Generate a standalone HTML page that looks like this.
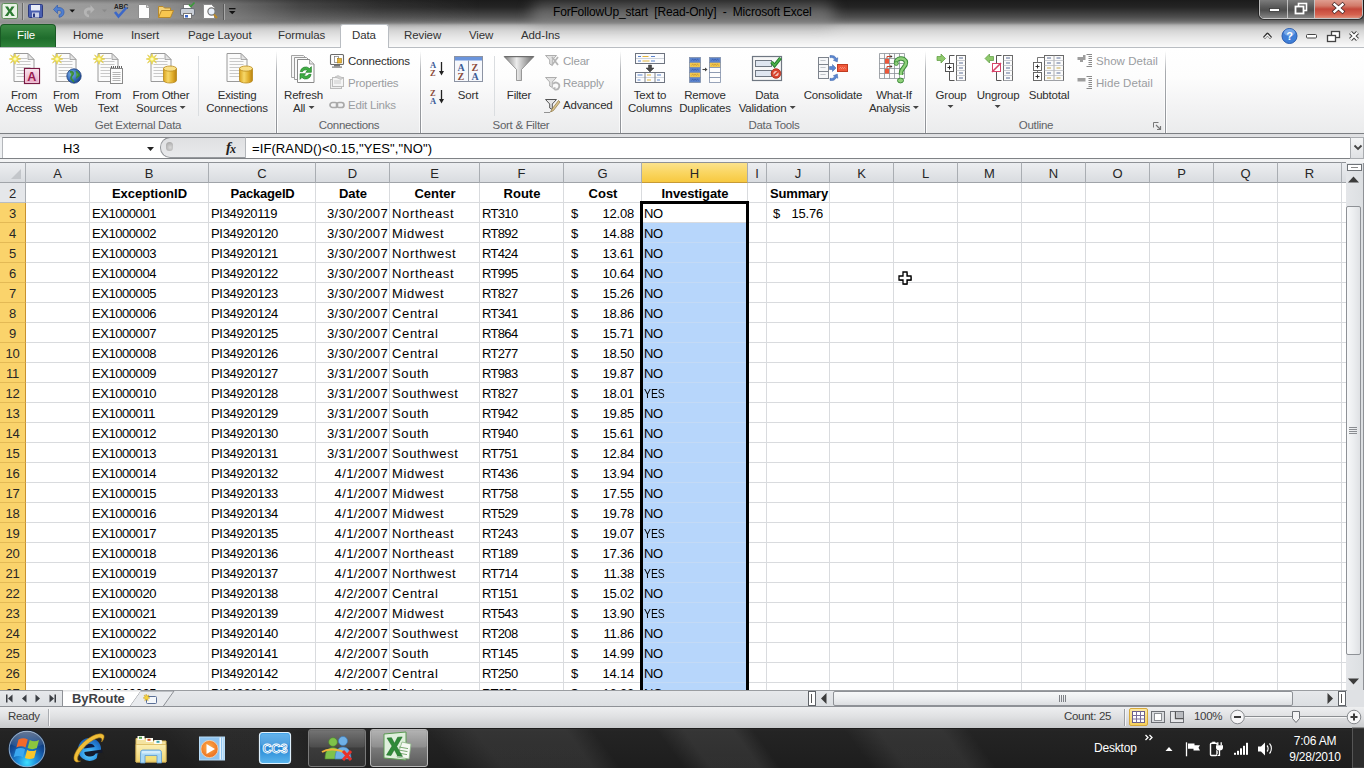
<!DOCTYPE html>
<html><head><meta charset="utf-8"><title>Excel</title>
<style>
*{box-sizing:border-box;margin:0;padding:0}
html,body{width:1364px;height:768px;overflow:hidden;background:#fff}
body{position:relative;font-family:"Liberation Sans",sans-serif;font-size:12px;color:#222}
.a{position:absolute}
.t{position:absolute;white-space:nowrap;line-height:1}
svg{position:absolute;overflow:visible}
/* title */
#title{left:0;top:0;width:1364px;height:47px;background:linear-gradient(#1b1b1b 0px,#242424 7px,#383838 12px,#4e4e4e 17px,#686868 21px,#808080 23px,#adadad 25px,#c0c0c0 27px,#d6d6d6 31px,#e6e6e6 37px,#f2f2f2 43px,#fafafa 47px)}
#qatglow{left:0;top:0;width:480px;height:30px;background:linear-gradient(90deg,rgba(172,172,172,.95) 0,rgba(160,160,160,.9) 150px,rgba(140,140,140,.75) 230px,rgba(120,120,120,.42) 300px,rgba(110,110,110,.18) 380px,rgba(100,100,100,0) 480px);-webkit-mask-image:linear-gradient(rgba(0,0,0,.75) 0,#000 4px,#000 18px,transparent 28px);mask-image:linear-gradient(rgba(0,0,0,.75) 0,#000 4px,#000 18px,transparent 28px)}
#titleglow{left:530px;top:3px;width:305px;height:24px;border-radius:12px;background:rgba(150,150,150,.5);filter:blur(7px)}
#titletxt{left:553px;top:6px;font-size:12px;color:#000;letter-spacing:-.18px}
/* tabs */
.tab{position:absolute;top:30px;font-size:11.500px;letter-spacing:-.1px;color:#333;white-space:nowrap;line-height:1}
#filetab{left:0;top:24px;width:56px;height:23px;border-radius:4px 4px 0 0;background:linear-gradient(#3c8a45,#1f6d2c 60%,#2e8139);border:1px solid #1a5a25;border-bottom:none}
#datatab{left:340px;top:24px;width:49px;height:24px;background:#fff;border:1px solid #b9bdc2;border-bottom:none;border-radius:3px 3px 0 0}
/* ribbon */
#ribbon{left:0;top:47px;width:1364px;height:87px;background:linear-gradient(#ffffff 0,#fdfdfd 28px,#f3f3f4 58px,#eaebec 87px);border-top:1px solid #b9bdc2}
#ribline{left:0;top:133px;width:1364px;height:1px;background:#7c7f83}
.gsep{position:absolute;top:51px;width:1px;height:82px;background:linear-gradient(rgba(160,163,167,0),#a9acb0 25%,#8e9196);box-shadow:1px 0 0 rgba(255,255,255,.9),-1px 0 0 rgba(255,255,255,.6)}
.isep{position:absolute;top:56px;width:1px;height:60px;background:#dadde0}
.gl{position:absolute;top:120px;font-size:11.500px;letter-spacing:-.3px;color:#5f6266;white-space:nowrap;line-height:1;transform:translateX(-50%)}
.bl{position:absolute;font-size:11.500px;letter-spacing:-.2px;color:#2e2e2e;white-space:nowrap;line-height:13px;text-align:center;transform:translateX(-50%)}
.sl{position:absolute;margin-top:1px;font-size:11.500px;letter-spacing:-.2px;color:#2e2e2e;white-space:nowrap;line-height:1}
.dis{color:#9a9da1}
.dd{display:inline-block;width:0;height:0;border-left:3px solid transparent;border-right:3px solid transparent;border-top:3px solid #444;vertical-align:middle;margin-left:3px;position:relative;top:-1px}
/* formula bar */
#fbar{left:0;top:134px;width:1364px;height:29px;background:linear-gradient(#dcdde0 0,#e2e3e5 3px,#eef0f2 4px,#eef0f2 24px,#f2f3f4 25px,#f4f5f6 29px)}
#namebox{left:2px;top:137px;width:170px;height:21px;background:#fff;border-top:1px solid #85888c;border-left:1px solid #b4b7bb}
#fxpill{left:160px;top:137px;width:86px;height:21px;background:linear-gradient(#dfe0e2,#e9eaec);border:1px solid #96999d;border-top-color:#85888c;border-right:none;border-radius:10px 0 0 10px}
#finput{left:245px;top:137px;width:1106px;height:21px;background:#fff;border-top:1px solid #85888c;border-left:1px solid #b4b7bb}
#fbline{left:0;top:158px;width:1364px;height:1px;background:#7f8286}
.ft{position:absolute;white-space:nowrap;line-height:1;font-size:13px;color:#000}
/* grid */
#grid{left:0;top:162px;width:1346px;height:528px;background:#fff;overflow:hidden}
.ch{position:absolute;top:0;height:21px;background:linear-gradient(#eceef1 0,#e3e5e8 50%,#d9dce0 100%);border-right:1px solid #a9adb2;border-bottom:1px solid #a0a4a9;border-top:1px solid #8e9196;font-size:13px;color:#262626;text-align:center;line-height:21px}
.ch.sel{background:linear-gradient(#fbe28c 0,#fad662 50%,#f7c940 100%);border-bottom-color:#c79a35}
.rh{position:absolute;left:0;width:26px;height:20px;background:#e5e7ea;border-right:1px solid #a9adb2;border-bottom:1px solid #b9bdc2;font-size:13px;color:#262626;text-align:center;line-height:21px;letter-spacing:-.2px}
.rh.sel{background:#fad36b;border-bottom-color:#e3b955;border-right-color:#c7912e}
.vl{position:absolute;top:21px;width:1px;height:510px;background:#d9dbde}
.hl{position:absolute;left:26px;height:1px;width:1321px;background:#d9dbde}
.c{position:absolute;white-space:nowrap;font-size:13px;line-height:22px;height:20px;color:#000}
.b{font-weight:bold;text-align:center}
.r{text-align:right}
.n{letter-spacing:-.45px}
.tx{letter-spacing:.35px}
/* scrollbars + tabs */
#vs{left:1346px;top:163px;width:18px;height:527px;background:linear-gradient(90deg,#e4e6e9,#dcdfe2);border-right:1px solid #8e9196}
.thumb{position:absolute;border:1px solid #8e9196;border-radius:2px}
#vthumb{left:1346px;top:206px;width:15px;height:449px;background:linear-gradient(90deg,#f7f8f9 0,#eceef0 50%,#dfe1e4 100%)}
#tabbar{left:0;top:690px;width:1364px;height:17px;background:linear-gradient(#e6e8eb,#dcdfe2);border-top:1px solid #9a9da1;border-bottom:1px solid #8e9196}
#hthumb{left:833px;top:691px;width:460px;height:15px;background:linear-gradient(#f7f8f9 0,#eceef0 50%,#dcdee1 100%)}
#status{left:0;top:707px;width:1364px;height:21px;background:linear-gradient(#eeeff0 0,#e0e1e3 45%,#c9cbcd 100%)}
.st{position:absolute;top:711px;font-size:11.500px;letter-spacing:-.3px;color:#3c3c3c;white-space:nowrap;line-height:1}
/* taskbar */
#taskbar{left:0;top:728px;width:1364px;height:40px;background:linear-gradient(#111 0,#2a2a2a 1px,#242424 3px,#212121 50%,#1d1d1d 100%)}
.tbtn{position:absolute;top:729px;height:38px;border-radius:3px}
.tt{position:absolute;color:#fff;white-space:nowrap;line-height:1;font-size:12px}

</style></head>
<body>
<!-- p_title -->
<div class="a" id="title"></div>
<div class="a" id="qatglow"></div>
<div class="a" id="titleglow"></div>
<div class="t" id="titletxt">ForFollowUp_start&nbsp; [Read-Only]&nbsp; -&nbsp; Microsoft Excel</div>
<svg style="left:0;top:0" width="250" height="24" viewBox="0 0 250 24">
<!-- excel icon -->
<rect x="2" y="3.5" width="15.5" height="15" rx="1.5" fill="#e9f3e6" stroke="#5d8f58" stroke-width="1"/>
<path d="M5 6.5 L8 6.5 L9.8 9.6 L11.6 6.5 L14.6 6.5 L11.3 11.2 L14.8 16 L11.7 16 L9.8 12.8 L7.9 16 L4.8 16 L8.3 11.2 Z" fill="#2c7a32"/>
<line x1="22.5" y1="3" x2="22.5" y2="20" stroke="#6a6a6a" stroke-width="1"/>
<line x1="23.5" y1="3" x2="23.5" y2="20" stroke="#b5b5b5" stroke-width="1"/>
<!-- save -->
<rect x="28.5" y="4.5" width="14" height="13" rx="1" fill="#4a5fb0" stroke="#2c3a80" stroke-width="1"/>
<rect x="31" y="5" width="9" height="5.5" fill="#e8ecf8"/>
<rect x="32" y="12.5" width="7" height="5" fill="#c9cfe6"/>
<rect x="33" y="13.5" width="2" height="3.5" fill="#2c3a80"/>
<!-- undo -->
<path d="M53.5 9.5 L57.5 5 L57.5 7.6 C62 7 64.5 9.5 64 13 C63.6 15.5 61.5 17.2 59 17.3 L59 14.8 C60.5 14.6 61.4 13.6 61.3 12.2 C61.2 10.8 60 10.2 57.5 10.6 L57.5 13.6 Z" fill="#4f7fd0" stroke="#2d56a8" stroke-width=".6"/>
<path d="M69.5 9.5 L75 9.5 L72.25 12.5 Z" fill="#111"/>
<!-- redo disabled -->
<path d="M94.5 9.5 L90.5 5 L90.5 7.6 C86 7 83.5 9.5 84 13 C84.4 15.5 86.5 17.2 89 17.3 L89 14.8 C87.5 14.6 86.6 13.6 86.7 12.2 C86.8 10.8 88 10.2 90.5 10.6 L90.5 13.6 Z" fill="#b8b8b8" opacity=".9"/>
<path d="M102 9.5 L107 9.5 L104.5 12.2 Z" fill="#8a8a8a"/>
<!-- spelling -->
<text x="114" y="8.5" font-family="Liberation Sans" font-size="6.5" font-weight="bold" fill="#222">ABC</text>
<path d="M115 12 L118.5 16.5 L126.5 7.5" fill="none" stroke="#3c68c8" stroke-width="2.6"/>
<!-- new -->
<path d="M138.5 4.5 L146.5 4.5 L149.5 7.5 L149.5 18.5 L138.5 18.5 Z" fill="#fdfdfd" stroke="#8c8c8c" stroke-width="1"/>
<path d="M146.5 4.5 L146.5 7.5 L149.5 7.5" fill="#d8d8d8" stroke="#8c8c8c" stroke-width=".8"/>
<!-- open -->
<path d="M158.5 17.5 L158.5 6.5 L163 6.5 L164.5 8 L170.5 8 L170.5 10" fill="#f3d27a" stroke="#b8892a" stroke-width="1"/>
<path d="M158.5 17.5 L161.5 10.5 L173.5 10.5 L170.5 17.5 Z" fill="#f7c64f" stroke="#b8892a" stroke-width="1"/>
<!-- print -->
<rect x="183.5" y="4.5" width="8" height="5" fill="#fff" stroke="#777" stroke-width="1"/>
<rect x="180.5" y="8.5" width="14" height="7" rx="1.5" fill="#c9ced6" stroke="#6b7078" stroke-width="1"/>
<rect x="183.500" y="13.5" width="8" height="5" fill="#fff" stroke="#777" stroke-width="1"/>
<rect x="185" y="15" width="3" height="2.5" fill="#3c68c8"/>
<path d="M189 4.5 L190.8 6.5 L194.5 2.5" fill="none" stroke="#3a9a3a" stroke-width="1.6"/>
<!-- preview -->
<path d="M203.500 4.500 L211.500 4.500 L214.500 7.500 L214.500 18.500 L203.500 18.500 Z" fill="#fdfdfd" stroke="#8c8c8c" stroke-width="1"/>
<circle cx="211.500" cy="11.500" r="3.600" fill="#e7eef8" stroke="#777" stroke-width="1.200"/>
<line x1="214" y1="14.500" x2="217" y2="18" stroke="#b8892a" stroke-width="2"/>
<line x1="223.500" y1="4" x2="223.500" y2="20" stroke="#5a5a5a" stroke-width="1"/>
<line x1="224.500" y1="4" x2="224.500" y2="20" stroke="#a8a8a8" stroke-width="1"/>
<!-- customize -->
<rect x="229" y="8" width="6.500" height="1.300" fill="#111"/>
<path d="M229 11 L235.500 11 L232.250 14.300 Z" fill="#111"/>
</svg>
<div class="a" style="left:1259px;top:-4px;width:104px;height:23px;border:1px solid rgba(235,235,235,.75);border-radius:0 0 5px 5px;overflow:hidden;box-shadow:0 0 0 1px rgba(20,20,20,.6)">
<div class="a" style="left:0;top:0;width:28px;height:22px;background:linear-gradient(#8a8a8a 0,#5a5a5a 45%,#4e4e4e 60%,#8c8c8c 100%);border-right:1px solid rgba(230,230,230,.7)"></div>
<div class="a" style="left:28px;top:0;width:27px;height:22px;background:linear-gradient(#8a8a8a 0,#5a5a5a 45%,#4e4e4e 60%,#8c8c8c 100%);border-right:1px solid rgba(230,230,230,.7)"></div>
<div class="a" style="left:55px;top:0;width:48px;height:22px;background:linear-gradient(#e6b0a4 0,#d27a6a 40%,#c4473a 55%,#d6624f 80%,#e29a86 100%)"></div>
</div>
<svg style="left:1259px;top:0" width="105" height="20" viewBox="0 0 105 20">
<rect x="10.500" y="8.500" width="10" height="3" fill="#fff" stroke="#333" stroke-width=".8"/>
<rect x="39.500" y="3.500" width="8" height="7" fill="none" stroke="#fff" stroke-width="1.600"/>
<rect x="36.500" y="6.500" width="8" height="7" fill="#555" stroke="#fff" stroke-width="1.800"/>
<path d="M75.500 4.500 L83.500 11.500 M83.500 4.500 L75.500 11.500" stroke="#4a2a2a" stroke-width="4" stroke-linecap="square"/>
<path d="M75.500 4.500 L83.500 11.500 M83.500 4.500 L75.500 11.500" stroke="#fff" stroke-width="2.400" stroke-linecap="square"/>
</svg>
<div class="a" id="filetab"></div>
<div class="a" id="datatab"></div>
<div class="tab" style="left:17px;color:#fff">File</div>
<div class="tab" style="left:73px">Home</div>
<div class="tab" style="left:131px">Insert</div>
<div class="tab" style="left:188px">Page Layout</div>
<div class="tab" style="left:278px">Formulas</div>
<div class="tab" style="left:352px">Data</div>
<div class="tab" style="left:404px">Review</div>
<div class="tab" style="left:469px">View</div>
<div class="tab" style="left:521px">Add-Ins</div>
<svg style="left:1255px;top:26px" width="109" height="20" viewBox="0 0 109 20">
<path d="M9 12 L12.500 8 L16 12" fill="none" stroke="#333" stroke-width="2.800" stroke-linejoin="round"/>
<path d="M9.500 12 L12.500 8.800 L15.500 12" fill="none" stroke="#fff" stroke-width="1.200"/>
<circle cx="34.500" cy="10" r="7.500" fill="#3f7fd8" stroke="#2a5cae" stroke-width="1"/>
<ellipse cx="34.500" cy="6.500" rx="5.500" ry="3.500" fill="#8db7ee" opacity=".7"/>
<text x="31.200" y="14.200" font-family="Liberation Sans" font-size="11" font-weight="bold" fill="#fff">?</text>
<rect x="51.500" y="8.500" width="10" height="3.500" rx="1" fill="#fff" stroke="#444" stroke-width="1"/>
<rect x="76.500" y="5.500" width="8" height="6" fill="#fff" stroke="#444" stroke-width="1.300"/>
<rect x="72.500" y="9.500" width="8" height="6" fill="#fff" stroke="#444" stroke-width="1.300"/>
<path d="M95.500 6.500 L102.500 13.500 M102.500 6.500 L95.500 13.500" stroke="#444" stroke-width="4"/>
<path d="M95.500 6.500 L102.500 13.500 M102.500 6.500 L95.500 13.500" stroke="#fff" stroke-width="2"/>
</svg>
<!-- p_ribbon -->
<div class="a" id="ribbon"></div><div class="a" id="ribline"></div>
<div class="a" style="left:341px;top:47px;width:47px;height:2px;background:#fff"></div>
<svg width="0" height="0" style="left:0;top:0"><defs>
<linearGradient id="gcyl" x1="0" x2="1" y1="0" y2="0"><stop offset="0" stop-color="#d9a21f"/><stop offset=".35" stop-color="#f7d869"/><stop offset=".7" stop-color="#e0ae2c"/><stop offset="1" stop-color="#b98212"/></linearGradient>
<linearGradient id="gfun" x1="0" x2="1" y1="0" y2="0"><stop offset="0" stop-color="#7a7a7a"/><stop offset=".42" stop-color="#ececec"/><stop offset=".6" stop-color="#c4c4c4"/><stop offset="1" stop-color="#6a6a6a"/></linearGradient>
<radialGradient id="gglobe" cx=".35" cy=".35" r=".8"><stop offset="0" stop-color="#7fb3ea"/><stop offset=".6" stop-color="#2f66b8"/><stop offset="1" stop-color="#16346e"/></radialGradient>
<linearGradient id="gacc" x1="0" x2="0" y1="0" y2="1"><stop offset="0" stop-color="#fbe4ee"/><stop offset="1" stop-color="#e8a4c2"/></linearGradient>
</defs></svg>
<div class="gsep" style="left:276px"></div>
<div class="gsep" style="left:420px"></div>
<div class="gsep" style="left:620px"></div>
<div class="gsep" style="left:925px"></div>
<div class="gsep" style="left:1165px"></div>
<div class="isep" style="left:198px"></div>
<div class="isep" style="left:494px"></div>
<div class="gl" style="left:138px">Get External Data</div>
<div class="gl" style="left:349px">Connections</div>
<div class="gl" style="left:521px">Sort &amp; Filter</div>
<div class="gl" style="left:774px">Data Tools</div>
<div class="gl" style="left:1036px">Outline</div>
<div class="bl" style="left:24px;top:89px">From<br>Access</div>
<div class="bl" style="left:66px;top:89px">From<br>Web</div>
<div class="bl" style="left:108px;top:89px">From<br>Text</div>
<div class="bl" style="left:161px;top:89px">From Other<br>Sources<span class="dd"></span></div>
<div class="bl" style="left:237px;top:89px">Existing<br>Connections</div>
<div class="bl" style="left:303.5px;top:89px">Refresh<br>All<span class="dd"></span></div>
<div class="bl" style="left:468px;top:89px">Sort</div>
<div class="bl" style="left:519px;top:89px">Filter</div>
<div class="bl" style="left:650px;top:89px">Text to<br>Columns</div>
<div class="bl" style="left:705px;top:89px">Remove<br>Duplicates</div>
<div class="bl" style="left:767px;top:89px">Data<br>Validation<span class="dd"></span></div>
<div class="bl" style="left:833px;top:89px">Consolidate</div>
<div class="bl" style="left:894px;top:89px">What-If<br>Analysis<span class="dd"></span></div>
<div class="bl" style="left:951px;top:89px">Group<br><span class="dd" style="margin-left:0;position:relative;top:-2px"></span></div>
<div class="bl" style="left:998px;top:89px">Ungroup<br><span class="dd" style="margin-left:0;position:relative;top:-2px"></span></div>
<div class="bl" style="left:1049px;top:89px">Subtotal</div>
<div class="sl" style="left:348px;top:55px">Connections</div>
<div class="sl dis" style="left:348px;top:77px">Properties</div>
<div class="sl dis" style="left:348px;top:99px">Edit Links</div>
<div class="sl dis" style="left:563px;top:55px">Clear</div>
<div class="sl dis" style="left:563px;top:77px">Reapply</div>
<div class="sl" style="left:563px;top:99px">Advanced</div>
<div class="sl dis" style="left:1096px;top:55px;letter-spacing:.05px">Show Detail</div>
<div class="sl dis" style="left:1096px;top:77px;letter-spacing:.05px">Hide Detail</div>
<svg style="left:8px;top:52px" width="32" height="32" viewBox="0 0 32 32"><path d="M6 1.5 L20 1.5 L26 7.5 L26 29.5 L6 29.5 Z" fill="#fbfbfb" stroke="#9a9a9a" stroke-width="1"/><path d="M20 1.5 L20 7.5 L26 7.5 Z" fill="#e3e3e3" stroke="#9a9a9a" stroke-width=".8"/><line x1="8.5" y1="6.5" x2="19.5" y2="6.5" stroke="#c9c9c9" stroke-width="1"/><line x1="8.5" y1="9.5" x2="22.5" y2="9.5" stroke="#c9c9c9" stroke-width="1"/><line x1="8.5" y1="12.5" x2="22.5" y2="12.5" stroke="#c9c9c9" stroke-width="1"/><line x1="8.5" y1="15.5" x2="22.5" y2="15.5" stroke="#c9c9c9" stroke-width="1"/><line x1="8.5" y1="18.5" x2="22.5" y2="18.5" stroke="#c9c9c9" stroke-width="1"/><line x1="8.5" y1="21.5" x2="22.5" y2="21.5" stroke="#c9c9c9" stroke-width="1"/><line x1="8.5" y1="24.5" x2="22.5" y2="24.5" stroke="#c9c9c9" stroke-width="1"/><g transform="translate(7,7) scale(.9)"><path d="M0 -6 L1.300 -2 L5 -4.500 L2.500 -1 L6.500 0 L2.500 1 L5 4.500 L1.300 2 L0 6 L-1.300 2 L-5 4.500 L-2.500 1 L-6.500 0 L-2.500 -1 L-5 -4.500 L-1.300 -2 Z" fill="#f5ec58" stroke="#d9c032" stroke-width=".6"/><circle r="1.800" fill="#fdf9c0"/></g><rect x="16.500" y="16.500" width="15" height="15" fill="url(#gacc)" stroke="#7a1a44" stroke-width="1.200"/><rect x="17.700" y="17.700" width="12.600" height="12.600" fill="none" stroke="#fff" stroke-opacity=".6" stroke-width=".8"/><text x="19.300" y="29.300" font-family="Liberation Sans" font-weight="bold" font-size="12.500" fill="#971a4e">A</text></svg>
<svg style="left:50px;top:52px" width="32" height="32" viewBox="0 0 32 32"><path d="M6 1.5 L20 1.5 L26 7.5 L26 29.5 L6 29.5 Z" fill="#fbfbfb" stroke="#9a9a9a" stroke-width="1"/><path d="M20 1.5 L20 7.5 L26 7.5 Z" fill="#e3e3e3" stroke="#9a9a9a" stroke-width=".8"/><line x1="8.5" y1="6.5" x2="19.5" y2="6.5" stroke="#c9c9c9" stroke-width="1"/><line x1="8.5" y1="9.5" x2="22.5" y2="9.5" stroke="#c9c9c9" stroke-width="1"/><line x1="8.5" y1="12.5" x2="22.5" y2="12.5" stroke="#c9c9c9" stroke-width="1"/><line x1="8.5" y1="15.5" x2="22.5" y2="15.5" stroke="#c9c9c9" stroke-width="1"/><line x1="8.5" y1="18.5" x2="22.5" y2="18.5" stroke="#c9c9c9" stroke-width="1"/><line x1="8.5" y1="21.5" x2="22.5" y2="21.5" stroke="#c9c9c9" stroke-width="1"/><line x1="8.5" y1="24.5" x2="22.5" y2="24.5" stroke="#c9c9c9" stroke-width="1"/><g transform="translate(7,7) scale(.9)"><path d="M0 -6 L1.300 -2 L5 -4.500 L2.500 -1 L6.500 0 L2.500 1 L5 4.500 L1.300 2 L0 6 L-1.300 2 L-5 4.500 L-2.500 1 L-6.500 0 L-2.500 -1 L-5 -4.500 L-1.300 -2 Z" fill="#f5ec58" stroke="#d9c032" stroke-width=".6"/><circle r="1.800" fill="#fdf9c0"/></g><circle cx="24" cy="24" r="7.200" fill="url(#gglobe)" stroke="#1d3f7c" stroke-width=".8"/><path transform="translate(0,1)" d="M20 19 C22 18 24 19.500 23 21.500 C22 23 20.500 23.500 21 25.500 C21.500 27 23 27.500 24 29 M26 18 C27.500 19.500 29.500 20 29 22.500 C28 24 26.500 23.500 26.500 25.500" fill="#4fa64a" stroke="#3c8a3a" stroke-width="1.600"/></svg>
<svg style="left:92px;top:52px" width="32" height="32" viewBox="0 0 32 32"><path d="M6 1.5 L20 1.5 L26 7.5 L26 29.5 L6 29.5 Z" fill="#fbfbfb" stroke="#9a9a9a" stroke-width="1"/><path d="M20 1.5 L20 7.5 L26 7.5 Z" fill="#e3e3e3" stroke="#9a9a9a" stroke-width=".8"/><line x1="8.5" y1="6.5" x2="19.5" y2="6.5" stroke="#c9c9c9" stroke-width="1"/><line x1="8.5" y1="9.5" x2="22.5" y2="9.5" stroke="#c9c9c9" stroke-width="1"/><line x1="8.5" y1="12.5" x2="22.5" y2="12.5" stroke="#c9c9c9" stroke-width="1"/><line x1="8.5" y1="15.5" x2="22.5" y2="15.5" stroke="#c9c9c9" stroke-width="1"/><line x1="8.5" y1="18.5" x2="22.5" y2="18.5" stroke="#c9c9c9" stroke-width="1"/><line x1="8.5" y1="21.5" x2="22.5" y2="21.5" stroke="#c9c9c9" stroke-width="1"/><line x1="8.5" y1="24.5" x2="22.5" y2="24.5" stroke="#c9c9c9" stroke-width="1"/><g transform="translate(7,7) scale(.9)"><path d="M0 -6 L1.300 -2 L5 -4.500 L2.500 -1 L6.500 0 L2.500 1 L5 4.500 L1.300 2 L0 6 L-1.300 2 L-5 4.500 L-2.500 1 L-6.500 0 L-2.500 -1 L-5 -4.500 L-1.300 -2 Z" fill="#f5ec58" stroke="#d9c032" stroke-width=".6"/><circle r="1.800" fill="#fdf9c0"/></g><g transform="translate(0,2)"><rect x="18.500" y="14.500" width="12" height="15" fill="#fcfcfc" stroke="#8a8a8a" stroke-width="1"/><path d="M19.500 14 v-2 M21.500 14 v-2 M23.500 14 v-2 M25.500 14 v-2 M27.500 14 v-2 M29.500 14 v-2" stroke="#555" stroke-width=".9"/><path d="M20.500 18.500 h8 M20.500 20.500 h8 M20.500 22.500 h8 M20.500 24.500 h8 M20.500 26.500 h8" stroke="#b5b5b5" stroke-width="1"/></g></svg>
<svg style="left:145px;top:52px" width="32" height="32" viewBox="0 0 32 32"><path d="M6 1.5 L20 1.5 L26 7.5 L26 29.5 L6 29.5 Z" fill="#fbfbfb" stroke="#9a9a9a" stroke-width="1"/><path d="M20 1.5 L20 7.5 L26 7.5 Z" fill="#e3e3e3" stroke="#9a9a9a" stroke-width=".8"/><line x1="8.5" y1="6.5" x2="19.5" y2="6.5" stroke="#c9c9c9" stroke-width="1"/><line x1="8.5" y1="9.5" x2="22.5" y2="9.5" stroke="#c9c9c9" stroke-width="1"/><line x1="8.5" y1="12.5" x2="22.5" y2="12.5" stroke="#c9c9c9" stroke-width="1"/><line x1="8.5" y1="15.5" x2="22.5" y2="15.5" stroke="#c9c9c9" stroke-width="1"/><line x1="8.5" y1="18.5" x2="22.5" y2="18.5" stroke="#c9c9c9" stroke-width="1"/><line x1="8.5" y1="21.5" x2="22.5" y2="21.5" stroke="#c9c9c9" stroke-width="1"/><line x1="8.5" y1="24.5" x2="22.5" y2="24.5" stroke="#c9c9c9" stroke-width="1"/><g transform="translate(7,7) scale(.9)"><path d="M0 -6 L1.300 -2 L5 -4.500 L2.500 -1 L6.500 0 L2.500 1 L5 4.500 L1.300 2 L0 6 L-1.300 2 L-5 4.500 L-2.500 1 L-6.500 0 L-2.500 -1 L-5 -4.500 L-1.300 -2 Z" fill="#f5ec58" stroke="#d9c032" stroke-width=".6"/><circle r="1.800" fill="#fdf9c0"/></g><path d="M18.5 16.6 L18.5 28.4 A6.5 2.6 0 0 0 31.5 28.4 L31.5 16.6 Z" fill="url(#gcyl)" stroke="#b98a1c" stroke-width=".8"/><ellipse cx="25" cy="16.6" rx="6.5" ry="2.6" fill="#f9e08a" stroke="#b98a1c" stroke-width=".8"/></svg>
<svg style="left:221px;top:52px" width="32" height="32" viewBox="0 0 32 32"><path d="M6 1.5 L20 1.5 L26 7.5 L26 29.5 L6 29.5 Z" fill="#fbfbfb" stroke="#9a9a9a" stroke-width="1"/><path d="M20 1.5 L20 7.5 L26 7.5 Z" fill="#e3e3e3" stroke="#9a9a9a" stroke-width=".8"/><line x1="8.5" y1="6.5" x2="19.5" y2="6.5" stroke="#c9c9c9" stroke-width="1"/><line x1="8.5" y1="9.5" x2="22.5" y2="9.5" stroke="#c9c9c9" stroke-width="1"/><line x1="8.5" y1="12.5" x2="22.5" y2="12.5" stroke="#c9c9c9" stroke-width="1"/><line x1="8.5" y1="15.5" x2="22.5" y2="15.5" stroke="#c9c9c9" stroke-width="1"/><line x1="8.5" y1="18.5" x2="22.5" y2="18.5" stroke="#c9c9c9" stroke-width="1"/><line x1="8.5" y1="21.5" x2="22.5" y2="21.5" stroke="#c9c9c9" stroke-width="1"/><line x1="8.5" y1="24.5" x2="22.5" y2="24.5" stroke="#c9c9c9" stroke-width="1"/><path d="M18.5 16.6 L18.5 28.4 A6.5 2.6 0 0 0 31.5 28.4 L31.5 16.6 Z" fill="url(#gcyl)" stroke="#b98a1c" stroke-width=".8"/><ellipse cx="25" cy="16.6" rx="6.5" ry="2.6" fill="#f9e08a" stroke="#b98a1c" stroke-width=".8"/></svg>
<svg style="left:288px;top:52px" width="32" height="32" viewBox="0 0 32 32"><path d="M3.500 3.500 h12 l4 4 v18 h-16 z" fill="#f6f6f6" stroke="#a4a4a4"/><path d="M6.500 5.500 h12 l4 4 v18 h-16 z" fill="#f9f9f9" stroke="#9a9a9a"/><path d="M9.500 7.500 h12 l4.500 4.500 v18.500 h-16.500 z" fill="#fefefe" stroke="#8a8a8a"/><path d="M21.500 7.500 v4.500 h4.500" fill="#e6e6e6" stroke="#8a8a8a" stroke-width=".8"/><g transform="translate(17.700,21) scale(1.350) translate(-18,-21)"><path d="M14 20 a4 4 0 0 1 6.800 -2.300 l1.400 -1.400 v4.200 h-4.200 l1.300 -1.300 a2.300 2.300 0 0 0 -3.600 .8 z M22 22 a4 4 0 0 1 -6.800 2.300 l-1.400 1.400 v-4.200 h4.200 l-1.300 1.300 a2.300 2.300 0 0 0 3.600 -.8 z" fill="#3fae44" stroke="#1f7a25" stroke-width=".5"/></g></svg>
<svg style="left:329px;top:53px" width="16" height="16" viewBox="0 0 16 16"><rect x="1.500" y="1.500" width="13" height="10" rx="1" fill="#fdfdfd" stroke="#6a6a6a" stroke-width="1.100"/><rect x="5" y="12" width="6" height="1.500" fill="#777"/><rect x="3" y="13.500" width="10" height="1.200" fill="#777"/><rect x="5.500" y="3.500" width="4" height="6" fill="#fff" stroke="#777" stroke-width=".7"/><rect x="8.500" y="5.500" width="4" height="4.500" fill="#eab73a" stroke="#a87c12" stroke-width=".6"/></svg>
<svg style="left:329px;top:75px" width="16" height="16" viewBox="0 0 16 16"><g opacity=".75"><rect x="1.500" y="4.500" width="11" height="9" fill="#ececec" stroke="#a8a8a8"/><rect x="3.500" y="2.500" width="11" height="9" fill="#f3f3f3" stroke="#a8a8a8"/><path d="M5 6 h7 M5 8 h7" stroke="#bdbdbd"/><path d="M6 2 l3 -1.500 l5 2.500 l-2 1.500 z" fill="#c4c4c4" stroke="#9c9c9c" stroke-width=".6"/></g></svg>
<svg style="left:329px;top:97px" width="16" height="16" viewBox="0 0 16 16"><g fill="none" stroke="#a9a9a9" stroke-width="1.700"><rect x="1" y="5.500" width="7.500" height="5" rx="2.500"/><rect x="7.500" y="5.500" width="7.500" height="5" rx="2.500"/></g></svg>
<svg style="left:429px;top:61px" width="16" height="16" viewBox="0 0 16 16"><text x="1" y="7" font-family="Liberation Serif" font-weight="bold" font-size="8.500" fill="#3b5b96">A</text><text x="1" y="14.500" font-family="Liberation Serif" font-weight="bold" font-size="8.500" fill="#8a4a3a">Z</text><path d="M12.500 1 v11" stroke="#222" stroke-width="1.300"/><path d="M10 10 h5 l-2.500 4.500 z" fill="#222"/></svg>
<svg style="left:429px;top:89px" width="16" height="16" viewBox="0 0 16 16"><text x="1" y="7" font-family="Liberation Serif" font-weight="bold" font-size="8.500" fill="#8a4a3a">Z</text><text x="1" y="14.500" font-family="Liberation Serif" font-weight="bold" font-size="8.500" fill="#3b5b96">A</text><path d="M12.500 1 v11" stroke="#222" stroke-width="1.300"/><path d="M10 10 h5 l-2.500 4.500 z" fill="#222"/></svg>
<svg style="left:453px;top:52px" width="32" height="32" viewBox="0 0 32 32"><rect x="1.500" y="4.500" width="28" height="25" fill="#f6f8fc" stroke="#8c93a3"/><rect x="2" y="5" width="27" height="3.500" fill="#6a94dc"/><line x1="15.500" y1="8.500" x2="15.500" y2="29" stroke="#8c93a3"/><text x="4.500" y="18.500" font-family="Liberation Serif" font-weight="bold" font-size="10" fill="#3b5b96">A</text><text x="4.500" y="27.500" font-family="Liberation Serif" font-weight="bold" font-size="10" fill="#8a4a3a">Z</text><text x="18.500" y="18.500" font-family="Liberation Serif" font-weight="bold" font-size="10" fill="#8a4a3a">Z</text><text x="18.500" y="27.500" font-family="Liberation Serif" font-weight="bold" font-size="10" fill="#3b5b96">A</text></svg>
<svg style="left:503px;top:52px" width="32" height="32" viewBox="0 0 32 32"><path d="M1 4.500 h30 l-12.500 13 v11 h-5 v-11 z" fill="url(#gfun)" stroke="#777" stroke-width=".7"/><path d="M1.500 4.700 h29" stroke="#666" stroke-width="1"/></svg>
<svg style="left:544px;top:53px" width="16" height="16" viewBox="0 0 16 16"><g opacity=".8"><path d="M1.500 2.500 h11 l-4.200 4.500 v5.500 l-2.600 -1.500 v-4 z" fill="#dcdcdc" stroke="#9a9a9a" stroke-width="1"/><path d="M8 4 l6 8 M14 4 l-6 8" stroke="#a4a4a4" stroke-width="1.800"/></g></svg>
<svg style="left:544px;top:75px" width="16" height="16" viewBox="0 0 16 16"><g opacity=".8"><path d="M1.500 2.500 h11 l-4.200 4.500 v5.500 l-2.600 -1.500 v-4 z" fill="#dcdcdc" stroke="#9a9a9a" stroke-width="1"/><path d="M9 9 a3.500 3.500 0 1 1 2 5.500" fill="none" stroke="#a4a4a4" stroke-width="1.800"/><path d="M8 13 l3.500 -1 l-.5 3.500 z" fill="#a4a4a4"/></g></svg>
<svg style="left:544px;top:97px" width="16" height="16" viewBox="0 0 16 16"><path d="M1.500 2.500 h11 l-4.200 4.500 v5.500 l-2.600 -1.500 v-4 z" fill="#e6e6e6" stroke="#555" stroke-width="1"/><path d="M14.500 3.500 l-6.500 8.500 l-1.500 3 l3 -1.500 l6.500 -8.500 z" fill="#dcc48c" stroke="#8a7444" stroke-width=".7"/><path d="M0.500 15.500 h5" stroke="#333" stroke-dasharray="1 1"/></svg>
<svg style="left:634px;top:52px" width="32" height="32" viewBox="0 0 32 32"><rect x="1.500" y="1.500" width="29" height="10" fill="#fbfcfe" stroke="#6e7480"/><path d="M2 6.500 h28" stroke="#c5cad3" stroke-width=".8"/><path d="M4 4.500 h3 M17 4.500 h4 M4 9 h3 M17 9 h4" stroke="#5b83cc" stroke-width="1.200"/><path d="M8.500 4.500 h6 M8.500 9 h7" stroke="#e2b33a" stroke-width="1.200"/><path d="M14.500 13 h3 v3 h2.500 l-4 4 l-4 -4 h2.500 z" fill="#4a4a4a" stroke="#2e2e2e" stroke-width=".5"/><rect x="1.500" y="20.500" width="29" height="10" fill="#fbfcfe" stroke="#6e7480"/><path d="M2 25.500 h28" stroke="#c5cad3" stroke-width=".8"/><path d="M11 20.500 v10 M21 20.500 v10" stroke="#6e7480" stroke-width=".9"/><path d="M3.500 23 h5 M23 23 h4 M3.500 28 h3 M23 28 h3" stroke="#5b83cc" stroke-width="1.200"/><path d="M13 23 h4 M13 28 h4" stroke="#e2b33a" stroke-width="1.200"/></svg>
<svg style="left:688px;top:52px" width="32" height="32" viewBox="0 0 32 32"><rect x="1.5" y="5.5" width="11" height="5" fill="#5b83cc" stroke="#7f8ea8" stroke-width=".8"/><rect x="1.5" y="10.5" width="11" height="5" fill="#f0c64e" stroke="#7f8ea8" stroke-width=".8"/><rect x="1.5" y="15.5" width="11" height="5" fill="#5b83cc" stroke="#7f8ea8" stroke-width=".8"/><rect x="1.5" y="20.5" width="11" height="5" fill="#f0c64e" stroke="#7f8ea8" stroke-width=".8"/><rect x="1.5" y="25.5" width="11" height="5" fill="#5b83cc" stroke="#7f8ea8" stroke-width=".8"/><path d="M14.500 17.500 h3" stroke="#444" stroke-width="1.100"/><path d="M17 15.500 l2.500 2 l-2.500 2 z" fill="#444"/><rect x="21.5" y="5.5" width="11" height="5" fill="#5b83cc" stroke="#7f8ea8" stroke-width=".8"/><rect x="21.5" y="10.5" width="11" height="5" fill="#f0c64e" stroke="#7f8ea8" stroke-width=".8"/><rect x="21.5" y="15.5" width="11" height="5" fill="#fdfdfd" stroke="#7f8ea8" stroke-width=".8"/><rect x="21.5" y="20.5" width="11" height="5" fill="#fdfdfd" stroke="#7f8ea8" stroke-width=".8"/><rect x="21.5" y="25.5" width="11" height="5" fill="#fdfdfd" stroke="#7f8ea8" stroke-width=".8"/><path d="M3.5 8.3 l1.200 -1 l1.200 1 l1.200 -1 l1.200 1 l1.200 -1 l1.200 1" fill="none" stroke="#2d4f9e" stroke-width=".7"/><path d="M3.5 13.3 l1.200 -1 l1.200 1 l1.200 -1 l1.200 1 l1.200 -1 l1.200 1" fill="none" stroke="#b8862a" stroke-width=".7"/><path d="M3.5 18.3 l1.200 -1 l1.200 1 l1.200 -1 l1.200 1 l1.200 -1 l1.200 1" fill="none" stroke="#2d4f9e" stroke-width=".7"/><path d="M3.5 23.3 l1.200 -1 l1.200 1 l1.200 -1 l1.200 1 l1.200 -1 l1.200 1" fill="none" stroke="#b8862a" stroke-width=".7"/><path d="M3.5 28.3 l1.200 -1 l1.200 1 l1.200 -1 l1.200 1 l1.200 -1 l1.200 1" fill="none" stroke="#2d4f9e" stroke-width=".7"/><path d="M23.5 8.3 l1.200 -1 l1.200 1 l1.200 -1 l1.200 1 l1.200 -1 l1.200 1" fill="none" stroke="#2d4f9e" stroke-width=".7"/><path d="M23.5 13.3 l1.200 -1 l1.200 1 l1.200 -1 l1.200 1 l1.200 -1 l1.200 1" fill="none" stroke="#b8862a" stroke-width=".7"/></svg>
<svg style="left:751px;top:52px" width="32" height="32" viewBox="0 0 32 32"><rect x="1.500" y="4.500" width="29" height="24" fill="#f7f7f7" stroke="#6f7782" stroke-width="1.200"/><rect x="4.500" y="8.500" width="16" height="6" fill="#dfe6f0" stroke="#6f7782"/><rect x="4.500" y="18.500" width="16" height="6" fill="#dfe6f0" stroke="#6f7782"/><path d="M20.500 10 l3 3.500 l6 -7.500" fill="none" stroke="#1f7a2a" stroke-width="3.400"/><path d="M20.500 10 l3 3.500 l6 -7.500" fill="none" stroke="#4fb04a" stroke-width="1.600"/><circle cx="25" cy="21.500" r="4.800" fill="#d8432e" stroke="#a82a1a" stroke-width=".8"/><circle cx="25" cy="21.500" r="2.600" fill="#f6c9c0"/><path d="M22.800 23.700 l4.400 -4.400" stroke="#d8432e" stroke-width="1.700"/></svg>
<svg style="left:817px;top:52px" width="32" height="32" viewBox="0 0 32 32"><rect x="1.500" y="5.500" width="10" height="7" fill="#f6f7f9" stroke="#7d838c"/><rect x="1.500" y="12.500" width="10" height="7" fill="#f6f7f9" stroke="#7d838c"/><rect x="1.500" y="19.500" width="10" height="7" fill="#f6f7f9" stroke="#7d838c"/><path d="M3.500 9 l1 -1 l1 1 l1 -1 l1 1 l1 -1 M3.500 16 l1 -1 l1 1 l1 -1 l1 1 l1 -1 M3.500 23 l1 -1 l1 1 l1 -1 l1 1 l1 -1" fill="none" stroke="#9aa0a8" stroke-width=".7"/><path d="M12.500 14.500 h3 v-2 l3.500 3.500 l-3.500 3.500 v-2 h-3 z" fill="#5b86d0" stroke="#3a62a8" stroke-width=".5"/><path d="M13 3.500 c3.500 -.5 5.500 .8 6.300 3 l1.500 -.8 l-.5 4.300 l-4 -1.800 l1.400 -.7 c-.8 -1.500 -2.200 -2.200 -4.700 -1.800 z" fill="#5b86d0" stroke="#3a62a8" stroke-width=".5"/><path d="M13 28.500 c3.500 .5 5.500 -.8 6.300 -3 l1.500 .8 l-.5 -4.300 l-4 1.800 l1.400 .7 c-.8 1.500 -2.200 2.200 -4.700 1.800 z" fill="#5b86d0" stroke="#3a62a8" stroke-width=".5"/><rect x="20.500" y="12.500" width="10" height="7" fill="#f0583a" stroke="#c03c22"/><path d="M22.500 16.500 l1 -1 l1 1 l1 -1 l1 1 l1 -1 l1 1" fill="none" stroke="#f9b9a8" stroke-width=".7"/></svg>
<svg style="left:878px;top:52px" width="32" height="32" viewBox="0 0 32 32"><rect x="1.500" y="1.500" width="25" height="25" fill="#fcfcfc"/><path d="M1.500 1.5 h25" stroke="#8a8f96" stroke-width=".8"/><path d="M1.500 6.5 h25" stroke="#8a8f96" stroke-width=".8"/><path d="M1.500 11.5 h25" stroke="#8a8f96" stroke-width=".8"/><path d="M1.500 16.5 h25" stroke="#8a8f96" stroke-width=".8"/><path d="M1.500 21.5 h25" stroke="#8a8f96" stroke-width=".8"/><path d="M1.500 26.5 h25" stroke="#8a8f96" stroke-width=".8"/><path d="M1.5 1.500 v25" stroke="#8a8f96" stroke-width=".8"/><path d="M6.5 1.500 v25" stroke="#8a8f96" stroke-width=".8"/><path d="M11.5 1.500 v25" stroke="#8a8f96" stroke-width=".8"/><path d="M16.5 1.500 v25" stroke="#8a8f96" stroke-width=".8"/><path d="M21.5 1.500 v25" stroke="#8a8f96" stroke-width=".8"/><path d="M26.5 1.500 v25" stroke="#8a8f96" stroke-width=".8"/><rect x="7" y="7" width="4" height="4.500" fill="#ee5638"/><rect x="7" y="17" width="4" height="4.500" fill="#ee5638"/><path d="M9 6.500 v-2 h4.500 M9 16.500 v-2 h4.500" fill="none" stroke="#c9412a" stroke-width="1"/><path d="M12.500 3 l2 1.500 l-2 1.500 z M12.500 13 l2 1.500 l-2 1.500 z" fill="#333"/><path d="M18 11.500 c-1 -6 9.500 -7 10 -1 c.3 4.500 -5 5.500 -5 10.500 v2" fill="none" stroke="#3c8a3a" stroke-width="4.400"/><path d="M18 11.500 c-1 -6 9.500 -7 10 -1 c.3 4.500 -5 5.500 -5 10.500 v2" fill="none" stroke="#8fd07a" stroke-width="2.400"/><ellipse cx="22.500" cy="28.500" rx="3" ry="2.400" fill="#8fd07a" stroke="#3c8a3a" stroke-width="1"/><circle cx="18.300" cy="11.500" r="2" fill="#8fd07a" stroke="#3c8a3a" stroke-width=".8"/></svg>
<svg style="left:935px;top:52px" width="32" height="32" viewBox="0 0 32 32"><rect x="21.5" y="3.500" width="9" height="25" fill="#fbfbfb" stroke="#6b6b6b"/><path d="M21.5 8.5 h9" stroke="#b4b8be" stroke-width=".7"/><path d="M24 6 h4" stroke="#5d6f96" stroke-width="1"/><path d="M21.5 13.5 h9" stroke="#b4b8be" stroke-width=".7"/><path d="M24 11 h4" stroke="#5d6f96" stroke-width="1"/><path d="M21.5 18.5 h9" stroke="#b4b8be" stroke-width=".7"/><path d="M24 16 h4" stroke="#5d6f96" stroke-width="1"/><path d="M21.5 23.5 h9" stroke="#b4b8be" stroke-width=".7"/><path d="M24 21 h4" stroke="#5d6f96" stroke-width="1"/><path d="M21.5 28.5 h9" stroke="#b4b8be" stroke-width=".7"/><path d="M24 26 h4" stroke="#5d6f96" stroke-width="1"/><path d="M19.500 3.500 h-5 v25 h5" fill="none" stroke="#555" stroke-width="1"/><rect x="10.500" y="11.500" width="8" height="8" fill="#fff" stroke="#555" stroke-width="1"/><path d="M12.500 15.500 h4 M14.500 13.500 v4" stroke="#222" stroke-width="1"/><path d="M2 4.500 h4 v-2.500 l4.500 4.500 l-4.500 4.500 v-2.500 h-4 z" fill="#8fc96c" stroke="#5a9a3e" stroke-width=".7"/></svg>
<svg style="left:982px;top:52px" width="32" height="32" viewBox="0 0 32 32"><rect x="21.5" y="3.500" width="9" height="25" fill="#fbfbfb" stroke="#6b6b6b"/><path d="M21.5 8.5 h9" stroke="#b4b8be" stroke-width=".7"/><path d="M24 6 h4" stroke="#5d6f96" stroke-width="1"/><path d="M21.5 13.5 h9" stroke="#b4b8be" stroke-width=".7"/><path d="M24 11 h4" stroke="#5d6f96" stroke-width="1"/><path d="M21.5 18.5 h9" stroke="#b4b8be" stroke-width=".7"/><path d="M24 16 h4" stroke="#5d6f96" stroke-width="1"/><path d="M21.5 23.5 h9" stroke="#b4b8be" stroke-width=".7"/><path d="M24 21 h4" stroke="#5d6f96" stroke-width="1"/><path d="M21.5 28.5 h9" stroke="#b4b8be" stroke-width=".7"/><path d="M24 26 h4" stroke="#5d6f96" stroke-width="1"/><path d="M19.500 3.500 h-5 v25 h5" fill="none" stroke="#555" stroke-width="1"/><rect x="10.500" y="11.500" width="8" height="8" fill="#fff" stroke="#d8446a" stroke-width="1"/><path d="M10 20 l9 -9" stroke="#d8446a" stroke-width="1.600"/><path d="M11.500 4.500 h-4 v-2.500 l-4.500 4.500 l4.500 4.500 v-2.500 h4 z" fill="#8fc96c" stroke="#5a9a3e" stroke-width=".7"/></svg>
<svg style="left:1032px;top:52px" width="32" height="32" viewBox="0 0 32 32"><rect x="12.500" y="3.500" width="19" height="25" fill="#fbfbfb" stroke="#6b6b6b"/><path d="M22 3.500 v25" stroke="#9a9a9a" stroke-width=".8"/><path d="M12.500 8.5 h19" stroke="#b4b8be" stroke-width=".7"/><path d="M15 6 h4 M24.500 6 h4" stroke="#5d6f96" stroke-width="1"/><path d="M12.500 13.5 h19" stroke="#b4b8be" stroke-width=".7"/><path d="M15 11 h4 M24.500 11 h4" stroke="#5d6f96" stroke-width="1"/><path d="M12.500 18.5 h19" stroke="#b4b8be" stroke-width=".7"/><path d="M15 16 h4 M24.500 16 h4" stroke="#c9aa4a" stroke-width="1"/><path d="M12.500 23.5 h19" stroke="#b4b8be" stroke-width=".7"/><path d="M15 21 h4 M24.500 21 h4" stroke="#5d6f96" stroke-width="1"/><path d="M12.500 28.5 h19" stroke="#b4b8be" stroke-width=".7"/><path d="M15 26 h4 M24.500 26 h4" stroke="#c9aa4a" stroke-width="1"/><path d="M12 5.500 h-6.500 v5 M5.500 18.500 v2" fill="none" stroke="#666" stroke-width=".9"/><rect x="1.500" y="10.500" width="8" height="8" fill="#fff" stroke="#5a5a5a" stroke-width=".9"/><path d="M3.500 14.500 h4 M5.500 12.500 v4" stroke="#222" stroke-width=".9"/><rect x="1.500" y="20.500" width="8" height="8" fill="#fff" stroke="#5a5a5a" stroke-width=".9"/><path d="M3.500 24.500 h4 M5.500 22.500 v4" stroke="#222" stroke-width=".9"/></svg>
<svg style="left:1077px;top:53px" width="16" height="16" viewBox="0 0 16 16"><path d="M9.500 1.500 h5.500 M11.500 3.500 h3.500 M11.500 5.500 h3.500 M11.500 7.500 h3.500 M11.500 9.500 h3.500 M11.500 11.500 h3.500 M9.500 13.500 h5.500" fill="none" stroke="#8a8a8a" stroke-width="1"/><path d="M3 3 h3 v-2 h2.500 v2 h0 v3 h-2.500 v2 h-3 v-2 h-2.500 v-3 h2.500 z" fill="#9d9d9d" transform="translate(0,1)"/></svg>
<svg style="left:1077px;top:75px" width="16" height="16" viewBox="0 0 16 16"><path d="M9.500 1.500 h5.500 M11.500 3.500 h3.500 M11.500 5.500 h3.500 M11.500 7.500 h3.500 M11.500 9.500 h3.500 M11.500 11.500 h3.500 M9.500 13.500 h5.500" fill="none" stroke="#8a8a8a" stroke-width="1"/><rect x="0.500" y="3" width="8" height="3.500" fill="#9d9d9d"/></svg>
<svg style="left:1152px;top:121px" width="10" height="10" viewBox="0 0 10 10"><path d="M1.500 6.500 v-5 h5" fill="none" stroke="#777" stroke-width="1"/><path d="M4 4 l4.500 4.500 M8.500 5 v3.500 h-3.500" fill="none" stroke="#777" stroke-width="1.200"/></svg>
<!-- p_formula -->
<div class="a" id="fbar"></div>
<div class="a" id="namebox"></div><div class="a" id="fxpill"></div><div class="a" id="finput"></div><div class="a" id="fbline"></div>
<div class="ft" style="left:63px;top:142px">H3</div>
<svg style="left:146px;top:146px" width="10" height="6"><path d="M1 1 h7 l-3.500 4 z" fill="#222"/></svg>
<div class="a" style="left:166px;top:142px;width:7px;height:9px;border-radius:4px;background:radial-gradient(circle at 60% 60%,#d8d8d8,#9c9c9c)"></div>
<div class="t" style="left:226px;top:140px;font-family:'Liberation Serif',serif;font-style:italic;font-weight:bold;font-size:15px;color:#222">f<span style="font-size:12px;position:relative;top:1px;left:-1px">x</span></div>
<div class="ft" style="left:252px;top:142px;letter-spacing:.1px">=IF(RAND()&lt;0.15,"YES","NO")</div>
<div class="a" style="left:1350px;top:137px;width:14px;height:22px;background:linear-gradient(#f4f5f6,#dfe1e4);border:1px solid #a9acb0"></div>
<svg style="left:1353px;top:144px" width="10" height="8"><path d="M1.500 1.500 l3.500 3.500 l3.500 -3.500" fill="none" stroke="#444" stroke-width="1.800"/></svg>
<!-- p_grid -->
<div class="a" id="grid">
<div class="ch" style="left:0;width:26px"></div>
<svg style="left:10px;top:6px" width="12" height="12"><path d="M11 1 v10 h-10 z" fill="#c3c6ca"/></svg>
<div class="ch" style="left:26px;width:64px">A</div>
<div class="ch" style="left:90px;width:119px">B</div>
<div class="ch" style="left:209px;width:107px">C</div>
<div class="ch" style="left:316px;width:74px">D</div>
<div class="ch" style="left:390px;width:90px">E</div>
<div class="ch" style="left:480px;width:84px">F</div>
<div class="ch" style="left:564px;width:78px">G</div>
<div class="ch sel" style="left:642px;width:106px">H</div>
<div class="ch" style="left:748px;width:19px">I</div>
<div class="ch" style="left:767px;width:63px">J</div>
<div class="ch" style="left:830px;width:64px">K</div>
<div class="ch" style="left:894px;width:64px">L</div>
<div class="ch" style="left:958px;width:64px">M</div>
<div class="ch" style="left:1022px;width:64px">N</div>
<div class="ch" style="left:1086px;width:64px">O</div>
<div class="ch" style="left:1150px;width:64px">P</div>
<div class="ch" style="left:1214px;width:64px">Q</div>
<div class="ch" style="left:1278px;width:64px">R</div>
<div class="ch" style="left:1342px;width:19px"></div>
<div class="rh" style="top:21px">2</div>
<div class="rh sel" style="top:41px">3</div>
<div class="rh sel" style="top:61px">4</div>
<div class="rh sel" style="top:81px">5</div>
<div class="rh sel" style="top:101px">6</div>
<div class="rh sel" style="top:121px">7</div>
<div class="rh sel" style="top:141px">8</div>
<div class="rh sel" style="top:161px">9</div>
<div class="rh sel" style="top:181px">10</div>
<div class="rh sel" style="top:201px">11</div>
<div class="rh sel" style="top:221px">12</div>
<div class="rh sel" style="top:241px">13</div>
<div class="rh sel" style="top:261px">14</div>
<div class="rh sel" style="top:281px">15</div>
<div class="rh sel" style="top:301px">16</div>
<div class="rh sel" style="top:321px">17</div>
<div class="rh sel" style="top:341px">18</div>
<div class="rh sel" style="top:361px">19</div>
<div class="rh sel" style="top:381px">20</div>
<div class="rh sel" style="top:401px">21</div>
<div class="rh sel" style="top:421px">22</div>
<div class="rh sel" style="top:441px">23</div>
<div class="rh sel" style="top:461px">24</div>
<div class="rh sel" style="top:481px">25</div>
<div class="rh sel" style="top:501px">26</div>
<div class="rh sel" style="top:521px">27</div>
<div class="vl" style="left:89px"></div>
<div class="vl" style="left:208px"></div>
<div class="vl" style="left:315px"></div>
<div class="vl" style="left:389px"></div>
<div class="vl" style="left:479px"></div>
<div class="vl" style="left:563px"></div>
<div class="vl" style="left:641px"></div>
<div class="vl" style="left:747px"></div>
<div class="vl" style="left:766px"></div>
<div class="vl" style="left:829px"></div>
<div class="vl" style="left:893px"></div>
<div class="vl" style="left:957px"></div>
<div class="vl" style="left:1021px"></div>
<div class="vl" style="left:1085px"></div>
<div class="vl" style="left:1149px"></div>
<div class="vl" style="left:1213px"></div>
<div class="vl" style="left:1277px"></div>
<div class="vl" style="left:1341px"></div>
<div class="vl" style="left:1360px"></div>
<div class="hl" style="top:40px"></div>
<div class="hl" style="top:60px"></div>
<div class="hl" style="top:80px"></div>
<div class="hl" style="top:100px"></div>
<div class="hl" style="top:120px"></div>
<div class="hl" style="top:140px"></div>
<div class="hl" style="top:160px"></div>
<div class="hl" style="top:180px"></div>
<div class="hl" style="top:200px"></div>
<div class="hl" style="top:220px"></div>
<div class="hl" style="top:240px"></div>
<div class="hl" style="top:260px"></div>
<div class="hl" style="top:280px"></div>
<div class="hl" style="top:300px"></div>
<div class="hl" style="top:320px"></div>
<div class="hl" style="top:340px"></div>
<div class="hl" style="top:360px"></div>
<div class="hl" style="top:380px"></div>
<div class="hl" style="top:400px"></div>
<div class="hl" style="top:420px"></div>
<div class="hl" style="top:440px"></div>
<div class="hl" style="top:460px"></div>
<div class="hl" style="top:480px"></div>
<div class="hl" style="top:500px"></div>
<div class="hl" style="top:520px"></div>
<div class="hl" style="top:540px"></div>
<div class="a" style="left:643px;top:61px;width:103px;height:470px;background:#b7d6fb"></div>
<div class="a" style="left:643px;top:80px;width:103px;height:1px;background:#c4daf5"></div>
<div class="a" style="left:643px;top:100px;width:103px;height:1px;background:#c4daf5"></div>
<div class="a" style="left:643px;top:120px;width:103px;height:1px;background:#c4daf5"></div>
<div class="a" style="left:643px;top:140px;width:103px;height:1px;background:#c4daf5"></div>
<div class="a" style="left:643px;top:160px;width:103px;height:1px;background:#c4daf5"></div>
<div class="a" style="left:643px;top:180px;width:103px;height:1px;background:#c4daf5"></div>
<div class="a" style="left:643px;top:200px;width:103px;height:1px;background:#c4daf5"></div>
<div class="a" style="left:643px;top:220px;width:103px;height:1px;background:#c4daf5"></div>
<div class="a" style="left:643px;top:240px;width:103px;height:1px;background:#c4daf5"></div>
<div class="a" style="left:643px;top:260px;width:103px;height:1px;background:#c4daf5"></div>
<div class="a" style="left:643px;top:280px;width:103px;height:1px;background:#c4daf5"></div>
<div class="a" style="left:643px;top:300px;width:103px;height:1px;background:#c4daf5"></div>
<div class="a" style="left:643px;top:320px;width:103px;height:1px;background:#c4daf5"></div>
<div class="a" style="left:643px;top:340px;width:103px;height:1px;background:#c4daf5"></div>
<div class="a" style="left:643px;top:360px;width:103px;height:1px;background:#c4daf5"></div>
<div class="a" style="left:643px;top:380px;width:103px;height:1px;background:#c4daf5"></div>
<div class="a" style="left:643px;top:400px;width:103px;height:1px;background:#c4daf5"></div>
<div class="a" style="left:643px;top:420px;width:103px;height:1px;background:#c4daf5"></div>
<div class="a" style="left:643px;top:440px;width:103px;height:1px;background:#c4daf5"></div>
<div class="a" style="left:643px;top:460px;width:103px;height:1px;background:#c4daf5"></div>
<div class="a" style="left:643px;top:480px;width:103px;height:1px;background:#c4daf5"></div>
<div class="a" style="left:643px;top:500px;width:103px;height:1px;background:#c4daf5"></div>
<div class="a" style="left:643px;top:520px;width:103px;height:1px;background:#c4daf5"></div>
<div class="a" style="left:643px;top:540px;width:103px;height:1px;background:#c4daf5"></div>
<div class="a" style="left:640px;top:39px;width:109px;height:500px;border:3px solid #000;border-bottom:none"></div>
<div class="c b" style="left:90px;top:21px;width:119px;letter-spacing:0px">ExceptionID</div>
<div class="c b" style="left:209px;top:21px;width:107px;letter-spacing:-0.2px">PackageID</div>
<div class="c b" style="left:316px;top:21px;width:74px;letter-spacing:0px">Date</div>
<div class="c b" style="left:390px;top:21px;width:90px;letter-spacing:0px">Center</div>
<div class="c b" style="left:480px;top:21px;width:84px;letter-spacing:0px">Route</div>
<div class="c b" style="left:564px;top:21px;width:78px;letter-spacing:0px">Cost</div>
<div class="c b" style="left:642px;top:21px;width:106px;letter-spacing:-0.1px">Investigate</div>
<div class="c b" style="left:767px;top:21px;width:64px;letter-spacing:-0.2px">Summary</div>
<div class="c" style="left:92px;top:41px;letter-spacing:-.44px">EX1000001</div>
<div class="c" style="left:211px;top:41px;letter-spacing:-.31px">PI34920119</div>
<div class="c r" style="left:316px;top:41px;width:72px;letter-spacing:.35px">3/30/2007</div>
<div class="c" style="left:392px;top:41px;letter-spacing:.65px">Northeast</div>
<div class="c" style="left:482px;top:41px;letter-spacing:-.66px">RT310</div>
<div class="c" style="left:571px;top:41px">$</div>
<div class="c r" style="left:580px;top:41px;width:54px;letter-spacing:-.2px">12.08</div>
<div class="c" style="left:644px;top:41px;letter-spacing:-.4px">NO</div>
<div class="c" style="left:92px;top:61px;letter-spacing:-.44px">EX1000002</div>
<div class="c" style="left:211px;top:61px;letter-spacing:-.31px">PI34920120</div>
<div class="c r" style="left:316px;top:61px;width:72px;letter-spacing:.35px">3/30/2007</div>
<div class="c" style="left:392px;top:61px;letter-spacing:.65px">Midwest</div>
<div class="c" style="left:482px;top:61px;letter-spacing:-.66px">RT892</div>
<div class="c" style="left:571px;top:61px">$</div>
<div class="c r" style="left:580px;top:61px;width:54px;letter-spacing:-.2px">14.88</div>
<div class="c" style="left:644px;top:61px;letter-spacing:-.4px">NO</div>
<div class="c" style="left:92px;top:81px;letter-spacing:-.44px">EX1000003</div>
<div class="c" style="left:211px;top:81px;letter-spacing:-.31px">PI34920121</div>
<div class="c r" style="left:316px;top:81px;width:72px;letter-spacing:.35px">3/30/2007</div>
<div class="c" style="left:392px;top:81px;letter-spacing:.65px">Northwest</div>
<div class="c" style="left:482px;top:81px;letter-spacing:-.66px">RT424</div>
<div class="c" style="left:571px;top:81px">$</div>
<div class="c r" style="left:580px;top:81px;width:54px;letter-spacing:-.2px">13.61</div>
<div class="c" style="left:644px;top:81px;letter-spacing:-.4px">NO</div>
<div class="c" style="left:92px;top:101px;letter-spacing:-.44px">EX1000004</div>
<div class="c" style="left:211px;top:101px;letter-spacing:-.31px">PI34920122</div>
<div class="c r" style="left:316px;top:101px;width:72px;letter-spacing:.35px">3/30/2007</div>
<div class="c" style="left:392px;top:101px;letter-spacing:.65px">Northeast</div>
<div class="c" style="left:482px;top:101px;letter-spacing:-.66px">RT995</div>
<div class="c" style="left:571px;top:101px">$</div>
<div class="c r" style="left:580px;top:101px;width:54px;letter-spacing:-.2px">10.64</div>
<div class="c" style="left:644px;top:101px;letter-spacing:-.4px">NO</div>
<div class="c" style="left:92px;top:121px;letter-spacing:-.44px">EX1000005</div>
<div class="c" style="left:211px;top:121px;letter-spacing:-.31px">PI34920123</div>
<div class="c r" style="left:316px;top:121px;width:72px;letter-spacing:.35px">3/30/2007</div>
<div class="c" style="left:392px;top:121px;letter-spacing:.65px">Midwest</div>
<div class="c" style="left:482px;top:121px;letter-spacing:-.66px">RT827</div>
<div class="c" style="left:571px;top:121px">$</div>
<div class="c r" style="left:580px;top:121px;width:54px;letter-spacing:-.2px">15.26</div>
<div class="c" style="left:644px;top:121px;letter-spacing:-.4px">NO</div>
<div class="c" style="left:92px;top:141px;letter-spacing:-.44px">EX1000006</div>
<div class="c" style="left:211px;top:141px;letter-spacing:-.31px">PI34920124</div>
<div class="c r" style="left:316px;top:141px;width:72px;letter-spacing:.35px">3/30/2007</div>
<div class="c" style="left:392px;top:141px;letter-spacing:.65px">Central</div>
<div class="c" style="left:482px;top:141px;letter-spacing:-.66px">RT341</div>
<div class="c" style="left:571px;top:141px">$</div>
<div class="c r" style="left:580px;top:141px;width:54px;letter-spacing:-.2px">18.86</div>
<div class="c" style="left:644px;top:141px;letter-spacing:-.4px">NO</div>
<div class="c" style="left:92px;top:161px;letter-spacing:-.44px">EX1000007</div>
<div class="c" style="left:211px;top:161px;letter-spacing:-.31px">PI34920125</div>
<div class="c r" style="left:316px;top:161px;width:72px;letter-spacing:.35px">3/30/2007</div>
<div class="c" style="left:392px;top:161px;letter-spacing:.65px">Central</div>
<div class="c" style="left:482px;top:161px;letter-spacing:-.66px">RT864</div>
<div class="c" style="left:571px;top:161px">$</div>
<div class="c r" style="left:580px;top:161px;width:54px;letter-spacing:-.2px">15.71</div>
<div class="c" style="left:644px;top:161px;letter-spacing:-.4px">NO</div>
<div class="c" style="left:92px;top:181px;letter-spacing:-.44px">EX1000008</div>
<div class="c" style="left:211px;top:181px;letter-spacing:-.31px">PI34920126</div>
<div class="c r" style="left:316px;top:181px;width:72px;letter-spacing:.35px">3/30/2007</div>
<div class="c" style="left:392px;top:181px;letter-spacing:.65px">Central</div>
<div class="c" style="left:482px;top:181px;letter-spacing:-.66px">RT277</div>
<div class="c" style="left:571px;top:181px">$</div>
<div class="c r" style="left:580px;top:181px;width:54px;letter-spacing:-.2px">18.50</div>
<div class="c" style="left:644px;top:181px;letter-spacing:-.4px">NO</div>
<div class="c" style="left:92px;top:201px;letter-spacing:-.44px">EX1000009</div>
<div class="c" style="left:211px;top:201px;letter-spacing:-.31px">PI34920127</div>
<div class="c r" style="left:316px;top:201px;width:72px;letter-spacing:.35px">3/31/2007</div>
<div class="c" style="left:392px;top:201px;letter-spacing:.65px">South</div>
<div class="c" style="left:482px;top:201px;letter-spacing:-.66px">RT983</div>
<div class="c" style="left:571px;top:201px">$</div>
<div class="c r" style="left:580px;top:201px;width:54px;letter-spacing:-.2px">19.87</div>
<div class="c" style="left:644px;top:201px;letter-spacing:-.4px">NO</div>
<div class="c" style="left:92px;top:221px;letter-spacing:-.44px">EX1000010</div>
<div class="c" style="left:211px;top:221px;letter-spacing:-.31px">PI34920128</div>
<div class="c r" style="left:316px;top:221px;width:72px;letter-spacing:.35px">3/31/2007</div>
<div class="c" style="left:392px;top:221px;letter-spacing:.65px">Southwest</div>
<div class="c" style="left:482px;top:221px;letter-spacing:-.66px">RT827</div>
<div class="c" style="left:571px;top:221px">$</div>
<div class="c r" style="left:580px;top:221px;width:54px;letter-spacing:-.2px">18.01</div>
<div class="c" style="left:644px;top:221px;transform:scaleX(.8);transform-origin:0 50%">YES</div>
<div class="c" style="left:92px;top:241px;letter-spacing:-.44px">EX1000011</div>
<div class="c" style="left:211px;top:241px;letter-spacing:-.31px">PI34920129</div>
<div class="c r" style="left:316px;top:241px;width:72px;letter-spacing:.35px">3/31/2007</div>
<div class="c" style="left:392px;top:241px;letter-spacing:.65px">South</div>
<div class="c" style="left:482px;top:241px;letter-spacing:-.66px">RT942</div>
<div class="c" style="left:571px;top:241px">$</div>
<div class="c r" style="left:580px;top:241px;width:54px;letter-spacing:-.2px">19.85</div>
<div class="c" style="left:644px;top:241px;letter-spacing:-.4px">NO</div>
<div class="c" style="left:92px;top:261px;letter-spacing:-.44px">EX1000012</div>
<div class="c" style="left:211px;top:261px;letter-spacing:-.31px">PI34920130</div>
<div class="c r" style="left:316px;top:261px;width:72px;letter-spacing:.35px">3/31/2007</div>
<div class="c" style="left:392px;top:261px;letter-spacing:.65px">South</div>
<div class="c" style="left:482px;top:261px;letter-spacing:-.66px">RT940</div>
<div class="c" style="left:571px;top:261px">$</div>
<div class="c r" style="left:580px;top:261px;width:54px;letter-spacing:-.2px">15.61</div>
<div class="c" style="left:644px;top:261px;letter-spacing:-.4px">NO</div>
<div class="c" style="left:92px;top:281px;letter-spacing:-.44px">EX1000013</div>
<div class="c" style="left:211px;top:281px;letter-spacing:-.31px">PI34920131</div>
<div class="c r" style="left:316px;top:281px;width:72px;letter-spacing:.35px">3/31/2007</div>
<div class="c" style="left:392px;top:281px;letter-spacing:.65px">Southwest</div>
<div class="c" style="left:482px;top:281px;letter-spacing:-.66px">RT751</div>
<div class="c" style="left:571px;top:281px">$</div>
<div class="c r" style="left:580px;top:281px;width:54px;letter-spacing:-.2px">12.84</div>
<div class="c" style="left:644px;top:281px;letter-spacing:-.4px">NO</div>
<div class="c" style="left:92px;top:301px;letter-spacing:-.44px">EX1000014</div>
<div class="c" style="left:211px;top:301px;letter-spacing:-.31px">PI34920132</div>
<div class="c r" style="left:316px;top:301px;width:72px;letter-spacing:.35px">4/1/2007</div>
<div class="c" style="left:392px;top:301px;letter-spacing:.65px">Midwest</div>
<div class="c" style="left:482px;top:301px;letter-spacing:-.66px">RT436</div>
<div class="c" style="left:571px;top:301px">$</div>
<div class="c r" style="left:580px;top:301px;width:54px;letter-spacing:-.2px">13.94</div>
<div class="c" style="left:644px;top:301px;letter-spacing:-.4px">NO</div>
<div class="c" style="left:92px;top:321px;letter-spacing:-.44px">EX1000015</div>
<div class="c" style="left:211px;top:321px;letter-spacing:-.31px">PI34920133</div>
<div class="c r" style="left:316px;top:321px;width:72px;letter-spacing:.35px">4/1/2007</div>
<div class="c" style="left:392px;top:321px;letter-spacing:.65px">Midwest</div>
<div class="c" style="left:482px;top:321px;letter-spacing:-.66px">RT758</div>
<div class="c" style="left:571px;top:321px">$</div>
<div class="c r" style="left:580px;top:321px;width:54px;letter-spacing:-.2px">17.55</div>
<div class="c" style="left:644px;top:321px;letter-spacing:-.4px">NO</div>
<div class="c" style="left:92px;top:341px;letter-spacing:-.44px">EX1000016</div>
<div class="c" style="left:211px;top:341px;letter-spacing:-.31px">PI34920134</div>
<div class="c r" style="left:316px;top:341px;width:72px;letter-spacing:.35px">4/1/2007</div>
<div class="c" style="left:392px;top:341px;letter-spacing:.65px">Midwest</div>
<div class="c" style="left:482px;top:341px;letter-spacing:-.66px">RT529</div>
<div class="c" style="left:571px;top:341px">$</div>
<div class="c r" style="left:580px;top:341px;width:54px;letter-spacing:-.2px">19.78</div>
<div class="c" style="left:644px;top:341px;letter-spacing:-.4px">NO</div>
<div class="c" style="left:92px;top:361px;letter-spacing:-.44px">EX1000017</div>
<div class="c" style="left:211px;top:361px;letter-spacing:-.31px">PI34920135</div>
<div class="c r" style="left:316px;top:361px;width:72px;letter-spacing:.35px">4/1/2007</div>
<div class="c" style="left:392px;top:361px;letter-spacing:.65px">Northeast</div>
<div class="c" style="left:482px;top:361px;letter-spacing:-.66px">RT243</div>
<div class="c" style="left:571px;top:361px">$</div>
<div class="c r" style="left:580px;top:361px;width:54px;letter-spacing:-.2px">19.07</div>
<div class="c" style="left:644px;top:361px;transform:scaleX(.8);transform-origin:0 50%">YES</div>
<div class="c" style="left:92px;top:381px;letter-spacing:-.44px">EX1000018</div>
<div class="c" style="left:211px;top:381px;letter-spacing:-.31px">PI34920136</div>
<div class="c r" style="left:316px;top:381px;width:72px;letter-spacing:.35px">4/1/2007</div>
<div class="c" style="left:392px;top:381px;letter-spacing:.65px">Northeast</div>
<div class="c" style="left:482px;top:381px;letter-spacing:-.66px">RT189</div>
<div class="c" style="left:571px;top:381px">$</div>
<div class="c r" style="left:580px;top:381px;width:54px;letter-spacing:-.2px">17.36</div>
<div class="c" style="left:644px;top:381px;letter-spacing:-.4px">NO</div>
<div class="c" style="left:92px;top:401px;letter-spacing:-.44px">EX1000019</div>
<div class="c" style="left:211px;top:401px;letter-spacing:-.31px">PI34920137</div>
<div class="c r" style="left:316px;top:401px;width:72px;letter-spacing:.35px">4/1/2007</div>
<div class="c" style="left:392px;top:401px;letter-spacing:.65px">Northwest</div>
<div class="c" style="left:482px;top:401px;letter-spacing:-.66px">RT714</div>
<div class="c" style="left:571px;top:401px">$</div>
<div class="c r" style="left:580px;top:401px;width:54px;letter-spacing:-.2px">11.38</div>
<div class="c" style="left:644px;top:401px;transform:scaleX(.8);transform-origin:0 50%">YES</div>
<div class="c" style="left:92px;top:421px;letter-spacing:-.44px">EX1000020</div>
<div class="c" style="left:211px;top:421px;letter-spacing:-.31px">PI34920138</div>
<div class="c r" style="left:316px;top:421px;width:72px;letter-spacing:.35px">4/2/2007</div>
<div class="c" style="left:392px;top:421px;letter-spacing:.65px">Central</div>
<div class="c" style="left:482px;top:421px;letter-spacing:-.66px">RT151</div>
<div class="c" style="left:571px;top:421px">$</div>
<div class="c r" style="left:580px;top:421px;width:54px;letter-spacing:-.2px">15.02</div>
<div class="c" style="left:644px;top:421px;letter-spacing:-.4px">NO</div>
<div class="c" style="left:92px;top:441px;letter-spacing:-.44px">EX1000021</div>
<div class="c" style="left:211px;top:441px;letter-spacing:-.31px">PI34920139</div>
<div class="c r" style="left:316px;top:441px;width:72px;letter-spacing:.35px">4/2/2007</div>
<div class="c" style="left:392px;top:441px;letter-spacing:.65px">Midwest</div>
<div class="c" style="left:482px;top:441px;letter-spacing:-.66px">RT543</div>
<div class="c" style="left:571px;top:441px">$</div>
<div class="c r" style="left:580px;top:441px;width:54px;letter-spacing:-.2px">13.90</div>
<div class="c" style="left:644px;top:441px;transform:scaleX(.8);transform-origin:0 50%">YES</div>
<div class="c" style="left:92px;top:461px;letter-spacing:-.44px">EX1000022</div>
<div class="c" style="left:211px;top:461px;letter-spacing:-.31px">PI34920140</div>
<div class="c r" style="left:316px;top:461px;width:72px;letter-spacing:.35px">4/2/2007</div>
<div class="c" style="left:392px;top:461px;letter-spacing:.65px">Southwest</div>
<div class="c" style="left:482px;top:461px;letter-spacing:-.66px">RT208</div>
<div class="c" style="left:571px;top:461px">$</div>
<div class="c r" style="left:580px;top:461px;width:54px;letter-spacing:-.2px">11.86</div>
<div class="c" style="left:644px;top:461px;letter-spacing:-.4px">NO</div>
<div class="c" style="left:92px;top:481px;letter-spacing:-.44px">EX1000023</div>
<div class="c" style="left:211px;top:481px;letter-spacing:-.31px">PI34920141</div>
<div class="c r" style="left:316px;top:481px;width:72px;letter-spacing:.35px">4/2/2007</div>
<div class="c" style="left:392px;top:481px;letter-spacing:.65px">South</div>
<div class="c" style="left:482px;top:481px;letter-spacing:-.66px">RT145</div>
<div class="c" style="left:571px;top:481px">$</div>
<div class="c r" style="left:580px;top:481px;width:54px;letter-spacing:-.2px">14.99</div>
<div class="c" style="left:644px;top:481px;letter-spacing:-.4px">NO</div>
<div class="c" style="left:92px;top:501px;letter-spacing:-.44px">EX1000024</div>
<div class="c" style="left:211px;top:501px;letter-spacing:-.31px">PI34920142</div>
<div class="c r" style="left:316px;top:501px;width:72px;letter-spacing:.35px">4/2/2007</div>
<div class="c" style="left:392px;top:501px;letter-spacing:.65px">Central</div>
<div class="c" style="left:482px;top:501px;letter-spacing:-.66px">RT250</div>
<div class="c" style="left:571px;top:501px">$</div>
<div class="c r" style="left:580px;top:501px;width:54px;letter-spacing:-.2px">14.14</div>
<div class="c" style="left:644px;top:501px;letter-spacing:-.4px">NO</div>
<div class="c" style="left:92px;top:521px;letter-spacing:-.44px">EX1000025</div>
<div class="c" style="left:211px;top:521px;letter-spacing:-.31px">PI34920143</div>
<div class="c r" style="left:316px;top:521px;width:72px;letter-spacing:.35px">4/2/2007</div>
<div class="c" style="left:392px;top:521px;letter-spacing:.65px">Midwest</div>
<div class="c" style="left:482px;top:521px;letter-spacing:-.66px">RT358</div>
<div class="c" style="left:571px;top:521px">$</div>
<div class="c r" style="left:580px;top:521px;width:54px;letter-spacing:-.2px">16.32</div>
<div class="c" style="left:644px;top:521px;letter-spacing:-.4px">NO</div>
<div class="c" style="left:773px;top:41px">$</div>
<div class="c r" style="left:780px;top:41px;width:43px;letter-spacing:-.2px">15.76</div>
</div>
<svg style="left:898px;top:271px" width="15" height="15" viewBox="0 0 15 15"><path d="M5.500 1.500 h4 v4 h4 v4 h-4 v4 h-4 v-4 h-4 v-4 h4 z" fill="#000"/><path d="M5 1 h4 v4 h4 v4 h-4 v4 h-4 v-4 h-4 v-4 h4 z" fill="#fff" stroke="#000" stroke-width="1.300"/></svg>
<!-- p_bottom -->
<div class="a" id="vs"></div>
<div class="a" style="left:1347px;top:164px;width:15px;height:7px;background:#fff;border:1px solid #6f7378"></div><div class="a" style="left:1351px;top:167px;width:7px;height:1px;background:#888"></div>
<svg style="left:1348px;top:176px" width="11" height="7"><path d="M0 6.500 l5.500 -6 l5.500 6 z" fill="#3c3c3c"/></svg>
<div class="thumb" id="vthumb"></div>
<div class="a" style="left:1349px;top:427px;width:8px;height:7px;background:repeating-linear-gradient(#8a8d91 0,#8a8d91 1px,transparent 1px,transparent 2px)"></div>
<svg style="left:1348px;top:678px" width="11" height="7"><path d="M0 .5 l5.500 6 l5.500 -6 z" fill="#3c3c3c"/></svg>
<div class="a" id="tabbar"></div>
<svg style="left:0;top:691px" width="180" height="16" viewBox="0 0 180 16"><g fill="#3a3d42"><rect x="6" y="3.500" width="1.500" height="8"/><path d="M12.500 3.500 v8 l-4.500 -4 z"/><path d="M26.500 3.500 v8 l-4.500 -4 z"/><path d="M35.500 3.500 v8 l4.500 -4 z"/><path d="M49.500 3.500 v8 l4.500 -4 z"/><rect x="54.500" y="3.500" width="1.500" height="8"/></g><path d="M62.500 0 V15.500 H130 L141 0 Z" fill="#fff" stroke="#8e9196" stroke-width="1"/><path d="M63 0 H140.500" stroke="#fff" stroke-width="1.500"/><path d="M130 15.500 H163 L174 0 H141" fill="#e9ebee" stroke="#8e9196" stroke-width="1"/><rect x="146.500" y="5.500" width="10" height="7" rx="1" fill="#f4f7fb" stroke="#5a6f96" stroke-width="1"/><path d="M146 3 l1 2 l2 -1 l-1 2 l2 1 l-2.200 .6 l.4 2.200 l-1.700 -1.400 l-1.700 1.400 l.4 -2.200 l-2.200 -.6 l2 -1 l-1 -2 l2 1 z" fill="#f5d23a" stroke="#c99a14" stroke-width=".4"/></svg>
<div class="t" style="left:72px;top:692px;font-size:13px;font-weight:bold;color:#3f4246;letter-spacing:-.1px">ByRoute</div>
<div class="a" style="left:808px;top:691px;width:8px;height:15px;background:#fff;border:1px solid #5f6368"></div><div class="a" style="left:811px;top:694px;width:1px;height:9px;background:#555"></div>
<svg style="left:821px;top:693px" width="6" height="11"><path d="M5.500 0 v11 l-5.500 -5.500 z" fill="#3c3c3c"/></svg>
<div class="thumb" id="hthumb"></div>
<div class="a" style="left:1059px;top:695px;width:8px;height:7px;background:repeating-linear-gradient(90deg,#7e8186 0,#7e8186 1px,transparent 1px,transparent 2px)"></div>
<svg style="left:1327px;top:693px" width="6" height="11"><path d="M.5 0 v11 l5.500 -5.500 z" fill="#3c3c3c"/></svg>
<div class="a" style="left:1338px;top:691px;width:8px;height:15px;background:#fff;border:1px solid #5f6368"></div><div class="a" style="left:1341px;top:694px;width:1px;height:9px;background:#555"></div>
<div class="a" style="left:1347px;top:690px;width:17px;height:17px;background:#dfe1e4"></div>
<div class="a" id="status"></div>
<div class="st" style="left:8px">Ready</div>
<div class="a" style="left:48px;top:709px;width:1px;height:17px;background:#a9acb0;box-shadow:1px 0 0 #f6f6f6"></div>
<div class="st" style="left:1064px">Count: 25</div>
<div class="a" style="left:1124px;top:709px;width:1px;height:17px;background:#9a9da1;box-shadow:1px 0 0 #f6f6f6"></div>
<div class="a" style="left:1129px;top:708px;width:19px;height:18px;background:linear-gradient(#fbe9a4,#f7d25c);border:1px solid #d8a93a;border-radius:2px"></div>
<svg style="left:1129px;top:708px" width="60" height="18" viewBox="0 0 60 18"><rect x="3.500" y="3.500" width="12" height="11" fill="#fff" stroke="#6a5f8a" stroke-width="1"/><path d="M3.500 7.500 h12 M3.500 11 h12 M7.500 3.500 v11 M11.500 3.500 v11" stroke="#7a6f9a" stroke-width="1"/><rect x="22.500" y="3.500" width="13" height="11" fill="#d9dbde" stroke="#6d7075" stroke-width="1"/><rect x="25.500" y="5.500" width="7" height="7" fill="#fff" stroke="#8a8d91" stroke-width="1"/><rect x="41.500" y="3.500" width="13" height="11" fill="#e6e7e9" stroke="#6d7075" stroke-width="1"/><path d="M46.500 3.500 v7 h8" fill="none" stroke="#555" stroke-width="1.300"/><rect x="47.500" y="4" width="6.500" height="6" fill="#b9bbbf"/></svg>
<div class="st" style="left:1194px">100%</div>
<div class="a" style="left:1245px;top:716px;width:102px;height:1px;background:#8a8d91;box-shadow:0 1px 0 #f4f4f4"></div>
<svg style="left:1229px;top:708px" width="135" height="19" viewBox="0 0 135 19"><circle cx="8.500" cy="9" r="6.800" fill="#f6f6f7" stroke="#85888c" stroke-width="1"/><rect x="5" y="8" width="7" height="2" fill="#3c3c3c"/><circle cx="125" cy="9" r="6.800" fill="#f6f6f7" stroke="#85888c" stroke-width="1"/><rect x="121.500" y="8" width="7" height="2" fill="#3c3c3c"/><rect x="124" y="5.500" width="2" height="7" fill="#3c3c3c"/><path d="M63.500 3.500 h7 v7 l-3.500 4 l-3.500 -4 z" fill="#f4f4f5" stroke="#6d7075" stroke-width="1"/></svg>
<!-- p_taskbar -->
<div class="a" id="taskbar"></div>
<div class="a" style="left:0;top:729px;width:1364px;height:39px;background:linear-gradient(54deg,rgba(255,255,255,0) 0,rgba(255,255,255,0) 13.6%,rgba(255,255,255,.035) 16.6%,rgba(255,255,255,.035) 21.6%,rgba(255,255,255,0) 23.6%,rgba(255,255,255,0) 32.6%,rgba(255,255,255,.075) 36.1%,rgba(255,255,255,.075) 42.6%,rgba(255,255,255,0) 44.6%,rgba(255,255,255,0) 49.1%,rgba(255,255,255,.08) 51.1%,rgba(255,255,255,.08) 54.6%,rgba(255,255,255,0) 56.1%,rgba(255,255,255,0) 62.6%,rgba(255,255,255,.075) 65.1%,rgba(255,255,255,.075) 69.6%,rgba(255,255,255,0) 71.6%,rgba(255,255,255,0) 100%)"></div>
<svg style="left:0;top:728px" width="440" height="40" viewBox="0 0 440 40"><defs>
<radialGradient id="orb" cx=".5" cy=".88" r=".85"><stop offset="0" stop-color="#3fe0ff"/><stop offset=".3" stop-color="#1f8fdc"/><stop offset=".62" stop-color="#134f9c"/><stop offset="1" stop-color="#0c2a5a"/></radialGradient>
<linearGradient id="orbhi" x1="0" x2="0" y1="0" y2="1"><stop offset="0" stop-color="#fff" stop-opacity=".75"/><stop offset="1" stop-color="#fff" stop-opacity=".05"/></linearGradient>
<radialGradient id="ieb" cx=".45" cy=".7" r=".8"><stop offset="0" stop-color="#5fd4ff"/><stop offset=".5" stop-color="#2a8ee0"/><stop offset="1" stop-color="#1450a8"/></radialGradient>
<linearGradient id="fold" x1="0" x2="0" y1="0" y2="1"><stop offset="0" stop-color="#fcefb4"/><stop offset="1" stop-color="#f0d46e"/></linearGradient>
<linearGradient id="cc3" x1="0" x2="0" y1="0" y2="1"><stop offset="0" stop-color="#4aa8ea"/><stop offset=".5" stop-color="#2a88d4"/><stop offset="1" stop-color="#5ab6ee"/></linearGradient>
<linearGradient id="tb1" x1="0" x2="0" y1="0" y2="1"><stop offset="0" stop-color="#6a6a6a"/><stop offset=".5" stop-color="#3c3c3c"/><stop offset="1" stop-color="#333"/></linearGradient>
<linearGradient id="tb2" x1="0" x2="0" y1="0" y2="1"><stop offset="0" stop-color="#a8a8a8"/><stop offset=".5" stop-color="#7a7a7a"/><stop offset="1" stop-color="#5a5a5a"/></linearGradient>
<radialGradient id="wmp" cx=".45" cy=".4" r=".7"><stop offset="0" stop-color="#ffb04a"/><stop offset="1" stop-color="#e8641a"/></radialGradient>
</defs>
<!-- start orb -->
<circle cx="27" cy="21" r="19" fill="#0a1a34" opacity=".7"/>
<circle cx="27" cy="21" r="17.800" fill="url(#orb)" stroke="#a8c8e6" stroke-width="1.100" stroke-opacity=".75"/>
<path d="M10.500 16 a17 17 0 0 1 33 0 c-8 5.500 -25 5.500 -33 0 z" fill="url(#orbhi)" opacity=".5"/>
<g transform="translate(27.500,21) scale(1.280) translate(-26,-21)">
<path d="M19 13.500 c2.500 -1.300 5 -1.300 7.200 0 l-1.700 6.300 c-2.200 -1.300 -4.600 -1.300 -7.200 0 z" fill="#f26a2a"/>
<path d="M27.800 14 c2.400 1.300 4.800 1.200 7.200 0 l-1.700 6.300 c-2.400 1.200 -4.800 1.200 -7.200 0 z" fill="#8cc63e"/>
<path d="M16.900 21.200 c2.500 -1.300 5 -1.300 7.200 0 l-1.700 6.300 c-2.200 -1.300 -4.600 -1.300 -7.200 0 z" fill="#3aa8f0"/>
<path d="M25.700 21.700 c2.400 1.300 4.800 1.200 7.200 0 l-1.700 6.300 c-2.400 1.200 -4.800 1.200 -7.200 0 z" fill="#f9c62a"/>
</g>
<!-- IE -->
<g transform="rotate(-8 89 21)">
<circle cx="89.500" cy="21.500" r="11.500" fill="url(#ieb)"/>
<path d="M84 19.800 A5.700 5.200 0 0 1 95 19.800 Z" fill="#0c1c44"/>
<path d="M84 23.300 H102 V26.500 H95 A6 4.600 0 0 1 84 23.300 Z" fill="#141a2c"/>
<path d="M97 26.500 h6 v6 h-8 z" fill="#1f1f1f"/>
</g>
<path d="M75.500 33.500 c-5 -4 3 -18 17 -25.500 c7 -3.500 12.500 -2.500 11.500 1.500 c-.5 2 -1.500 3.500 -2.500 4.500 c1.200 -3.200 0 -4.800 -3.500 -4 c-8 2 -20.500 14 -20.500 21 c0 1.500 1 2.500 3 2 c-2 1.200 -4 1.300 -5 .5 z" fill="#f0be38" stroke="#a87a18" stroke-width=".6"/>
<!-- explorer -->
<path d="M136 10.500 h9.500 l2 2.500 h18.500 v21 h-30 z" fill="#f5e3a0" stroke="#d9b85a" stroke-width="1"/>
<rect x="137.500" y="8" width="7" height="4" fill="#fdfdf4"/><rect x="146" y="10" width="7" height="4" fill="#fdfdf4"/><rect x="154" y="12" width="8" height="4" rx="1" fill="#fdfdf4"/>
<rect x="139" y="8.800" width="3" height="2" fill="#4fa04a"/><rect x="147.500" y="10.800" width="3" height="2" fill="#d8562a"/><rect x="156.500" y="12.800" width="3" height="2" fill="#3aa0a8"/>
<path d="M136 16.500 h30 v17.500 h-30 z" fill="url(#fold)" stroke="#d9b85a" stroke-width=".8"/>
<path d="M140.500 35 v-10.500 c0 -1.500 1 -2.500 2.500 -2.500 h16 c1.500 0 2.500 1 2.500 2.500 v10.500 h-4.500 v-7.500 h-12 v7.500 z" fill="#a8d8f6" stroke="#5a9ad0" stroke-width=".8"/>
<rect x="142" y="23" width="18" height="2.500" fill="#dff2fd" opacity=".8"/>
<rect x="146" y="28.500" width="10" height="3" fill="#f2e27a"/>
<!-- WMP -->
<rect x="199.500" y="9" width="25" height="23" fill="#8fc4f0" stroke="#b8dcf8" stroke-width="1"/>
<rect x="219.500" y="9.500" width="1.500" height="22" fill="#e8f4fd"/><rect x="222" y="9.500" width="1.500" height="22" fill="#d0e8fa"/>
<circle cx="209.500" cy="21" r="8.600" fill="url(#wmp)" stroke="#f8d8b0" stroke-width=".8"/>
<path d="M206.500 16 v10 l8.500 -5 z" fill="#fff"/>
<!-- CC3 -->
<rect x="259.500" y="4.500" width="31" height="31" rx="3" fill="url(#cc3)" stroke="#dff0fc" stroke-width="1.200"/>
<rect x="261" y="6" width="28" height="12" rx="2" fill="#fff" opacity=".15"/>
<text x="262.500" y="25" font-family="Liberation Sans" font-weight="bold" font-size="12.500" fill="#2a88d4" stroke="#fff" stroke-width=".9" textLength="25" lengthAdjust="spacingAndGlyphs">CC3</text>
<!-- messenger button -->
<rect x="308.500" y="1.500" width="57" height="37" rx="2.500" fill="url(#tb1)" stroke="#7a7a7a" stroke-width="1"/>
<rect x="309.500" y="2.500" width="55" height="17" rx="2" fill="#fff" opacity=".08"/>
<circle cx="333" cy="14" r="4.300" fill="#7fc24a" stroke="#4a8a2a" stroke-width=".6"/>
<path d="M325 31 c0 -8 3 -11.500 8 -11.500 s8 3.500 8 11.500 z" fill="#7fc24a" stroke="#4a8a2a" stroke-width=".6"/>
<circle cx="343" cy="13" r="4.500" fill="#6fb0e6" stroke="#3a78b8" stroke-width=".6"/>
<path d="M335 31 c0 -8 3 -12 8 -12 s8 4 8 12 z" fill="#6fb0e6" stroke="#3a78b8" stroke-width=".6"/>
<path d="M322 24 c6 -4 16 -3 24 1" fill="none" stroke="#f0b43a" stroke-width="2"/>
<path d="M343 23 l8 9 M351 23 l-8 9" stroke="#e8322a" stroke-width="3"/>
<!-- excel button -->
<rect x="370.500" y="1.500" width="57" height="37" rx="2.500" fill="url(#tb2)" stroke="#b8b8b8" stroke-width="1"/>
<rect x="371.500" y="2.500" width="55" height="17" rx="2" fill="#fff" opacity=".14"/>
<path d="M384 6 l22 -2 v28 l-22 -2 z" fill="#dff0dc" stroke="#5a9a52" stroke-width="1"/>
<path d="M402 14 l9 2 l-2 15 l-12 -2 z" fill="#f4f8f2" stroke="#8ab484" stroke-width=".8"/>
<path d="M399 19 l9 1.600 M398.500 22 l9 1.600 M398 25 l9 1.600" stroke="#7aaa72" stroke-width="1"/>
<path d="M387 10 l4.500 -.3 l3 5.500 l3.200 -6 l4.500 -.3 l-5.500 9.500 l5.800 10 l-4.800 -.4 l-3.400 -6.300 l-3.300 5.800 l-4.500 -.4 l5.500 -9 z" fill="#2f8a38" stroke="#1c6424" stroke-width=".5"/>
</svg>
<div class="tt" style="left:1094px;top:742px;letter-spacing:-.2px">Desktop</div>
<svg style="left:1140px;top:728px" width="224" height="40" viewBox="0 0 224 40">
<path d="M5.500 7 l2.500 2.500 l-2.500 2.500 M9.500 7 l2.500 2.500 l-2.500 2.500" fill="none" stroke="#fff" stroke-width="1.300"/>
<path d="M25.500 23 h7 l-3.500 -4 z" fill="#fff"/>
<path d="M46.500 14.300 v14" stroke="#fff" stroke-width="1.300"/><path d="M48 15.500 h6.500 v1.700 h5.500 l-1.500 2.600 l1.500 2.600 h-6.500 v-1.600 h-5.500 z" fill="#fff"/>
<rect x="70.500" y="15.200" width="6.500" height="12.300" rx="1" fill="none" stroke="#fff" stroke-width="1.400"/><rect x="72.200" y="13.700" width="3" height="1.500" fill="#fff"/>
<path d="M75.300 16.800 h8.400 v3 a4.200 3.600 0 0 1 -3 3.300 v5 h-3.600 v-2.200 h1.200 v-2.800 a4.200 3.600 0 0 1 -3 -3.300 z" fill="#222"/>
<path d="M77.800 14.300 v3.200 M81.200 14.300 v3.200" stroke="#fff" stroke-width="1.300"/><path d="M76 17.300 h7 v2.300 a3.500 3 0 0 1 -7 0 z" fill="#fff"/><path d="M79.500 22 v5.300 h-2" stroke="#fff" stroke-width="1.300" fill="none"/>
<g fill="#fff" transform="translate(0,.8)"><rect x="94" y="24" width="2" height="2"/><rect x="97" y="22" width="2" height="4"/><rect x="100" y="19.500" width="2" height="6.500"/><rect x="103" y="17" width="2" height="9"/><rect x="106" y="14" width="2" height="12"/></g>
<path d="M118 18.500 h3 l4 -4 v13 l-4 -4 h-3 z" fill="#fff"/><path d="M127 17.500 c1.500 1.500 1.500 4.500 0 6 M129.500 15.500 c2.500 2.500 2.500 7.500 0 10" fill="none" stroke="#fff" stroke-width="1.100"/>
<rect x="212.500" y="0" width="12" height="40" fill="#2c2c2c" stroke="#555" stroke-width="1"/>
</svg>
<div class="tt" style="left:1315px;top:735px;transform:translateX(-50%);letter-spacing:-.2px">7:06 AM</div>
<div class="tt" style="left:1315px;top:751px;transform:translateX(-50%);letter-spacing:-.2px">9/28/2010</div>
</body></html>
